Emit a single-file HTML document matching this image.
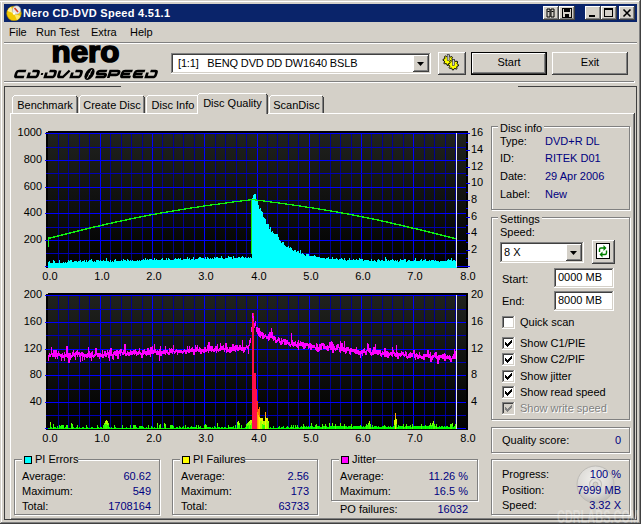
<!DOCTYPE html>
<html><head><meta charset="utf-8"><style>
html,body{margin:0;padding:0}
body{width:641px;height:524px;position:relative;overflow:hidden;background:#d4d0c8;font-family:"Liberation Sans",sans-serif;font-size:11px;color:#000}
.t{position:absolute;white-space:pre;line-height:13px;font-family:"Liberation Sans",sans-serif;font-size:11px}
</style></head><body>
<div style="position:absolute;left:0px;top:1px;width:640px;height:1px;background:#fff"></div>
<div style="position:absolute;left:1px;top:1px;width:1px;height:522px;background:#fff"></div>
<div style="position:absolute;left:639px;top:1px;width:1px;height:522px;background:#808080"></div>
<div style="position:absolute;left:1px;top:522px;width:639px;height:1px;background:#808080"></div>
<div style="position:absolute;left:640px;top:0px;width:1px;height:524px;background:#404040"></div>
<div style="position:absolute;left:0px;top:523px;width:641px;height:1px;background:#404040"></div>
<div style="position:absolute;left:4px;top:4px;width:633px;height:18px;background:#0a246a"></div>
<svg style="position:absolute;left:6px;top:5px" width="16" height="16" viewBox="0 0 16 16">
<circle cx="8" cy="8.5" r="7.3" fill="#f2c800" stroke="#b08a00" stroke-width="0.6"/>
<path d="M8 8.5 L1.5 6 A7 7 0 0 1 5 1.8 Z" fill="#fff3a0"/>
<path d="M8 8.5 L14.5 11 A7 7 0 0 1 11 15.2 Z" fill="#ffe860"/>
<circle cx="10.5" cy="5" r="4.2" fill="#e8e8e8" stroke="#999" stroke-width="0.5"/>
<path d="M8.5 3 L12 7" stroke="#e04020" stroke-width="1.6"/>
<circle cx="8" cy="8.5" r="1.2" fill="#fff"/>
</svg>
<div class="t" style="left:23px;top:4px;color:#fff;font-weight:bold;letter-spacing:0.28px;line-height:18px">Nero CD-DVD Speed 4.51.1</div>
<div style="position:absolute;left:543px;top:6px;width:16px;height:14px;box-shadow:inset -1px -1px #404040, inset 1px 1px #fff, inset -2px -2px #808080, inset 2px 2px #d4d0c8;background:#d4d0c8"><svg width="16" height="14" style="position:absolute;left:0;top:0"><path d="M4 3h3v8h-3z M8 3h3v8h-3z" fill="none" stroke="#000" stroke-width="1"/><rect x="4.5" y="5" width="2" height="1" fill="#000"/><rect x="8.5" y="5" width="2" height="1" fill="#000"/></svg></div>
<div style="position:absolute;left:559px;top:6px;width:16px;height:14px;box-shadow:inset -1px -1px #404040, inset 1px 1px #fff, inset -2px -2px #808080, inset 2px 2px #d4d0c8;background:#d4d0c8"><svg width="16" height="14" style="position:absolute;left:0;top:0"><rect x="3.5" y="2.5" width="9" height="9" fill="none" stroke="#000"/><rect x="5" y="3" width="6" height="3" fill="#000"/><rect x="6" y="8" width="4" height="3" fill="#000"/></svg></div>
<div style="position:absolute;left:585px;top:6px;width:16px;height:14px;box-shadow:inset -1px -1px #404040, inset 1px 1px #fff, inset -2px -2px #808080, inset 2px 2px #d4d0c8;background:#d4d0c8"><div style="position:absolute;left:4px;top:9px;width:6px;height:2px;background:#000"></div></div>
<div style="position:absolute;left:601px;top:6px;width:16px;height:14px;box-shadow:inset -1px -1px #404040, inset 1px 1px #fff, inset -2px -2px #808080, inset 2px 2px #d4d0c8;background:#d4d0c8"><div style="position:absolute;left:3px;top:2px;width:9px;height:9px;box-sizing:border-box;border:1px solid #000;border-top-width:2px"></div></div>
<div style="position:absolute;left:619px;top:6px;width:16px;height:14px;box-shadow:inset -1px -1px #404040, inset 1px 1px #fff, inset -2px -2px #808080, inset 2px 2px #d4d0c8;background:#d4d0c8"><svg width="16" height="14" style="position:absolute;left:0;top:0"><path d="M4.5 3.5 L11.5 10.5 M11.5 3.5 L4.5 10.5" stroke="#000" stroke-width="1.6"/></svg></div>
<div class="t" style="left:9px;top:26px;">File</div>
<div class="t" style="left:36px;top:26px;">Run Test</div>
<div class="t" style="left:91px;top:26px;">Extra</div>
<div class="t" style="left:130px;top:26px;">Help</div>
<div style="position:absolute;left:4px;top:42px;width:633px;height:1px;background:#808080"></div>
<div style="position:absolute;left:4px;top:43px;width:633px;height:1px;background:#fff"></div>
<svg style="position:absolute;left:0;top:40px" width="170" height="42" viewBox="0 40 170 42"><text x="51.5" y="62" font-family="Liberation Sans" font-weight="bold" font-size="30" stroke="#000" stroke-width="1.6" textLength="68" lengthAdjust="spacingAndGlyphs">nero</text></svg>
<svg style="position:absolute;left:0;top:70px" width="170" height="9" viewBox="0 0 170 9" overflow="visible"><g transform="translate(0,4) skewX(-18) translate(0,-4)" fill="none" stroke="#000" stroke-width="2.7"><path transform="translate(15,0)" d="M10 1 H3 Q1 1 1 3 V5 Q1 7 3 7 H10"/><path transform="translate(28,0)" d="M3.5 1 H8 Q10 1 10 3 V5 Q10 7 8 7 H1 V2.5"/><path transform="translate(45,0)" d="M3.5 1 H8 Q10 1 10 3 V5 Q10 7 8 7 H1 V2.5"/><path transform="translate(58,0)" d="M1 0.5 V5 Q1 7 3 7 H6 L10.5 0.5"/><path transform="translate(71,0)" d="M3.5 1 H8 Q10 1 10 3 V5 Q10 7 8 7 H1 V2.5"/><path transform="translate(96,0)" d="M10 1 H3 Q1 1 1 2.5 Q1 4 3 4 H8 Q10 4 10 5.5 Q10 7 8 7 H0.5"/><path transform="translate(108.5,0)" d="M1 8 V1 H8 Q10 1 10 2.5 V3 Q10 4.8 8 4.8 H2"/><path transform="translate(121,0)" d="M10.5 1 H3 Q1 1 1 3 V5 Q1 7 3 7 H10.5 M2 4 H9"/><path transform="translate(133.5,0)" d="M10.5 1 H3 Q1 1 1 3 V5 Q1 7 3 7 H10.5 M2 4 H9"/><path transform="translate(146,0)" d="M3.5 1 H8 Q10 1 10 3 V5 Q10 7 8 7 H1 V2.5"/></g><g transform="translate(0,4) skewX(-18) translate(0,-4)"><rect x="41" y="3" width="2" height="2" fill="#000"/></g><g transform="translate(89.5,4) rotate(-55)"><ellipse cx="0" cy="0" rx="6.8" ry="4" fill="#000"/><path d="M-5 0.6 L5 -0.6" stroke="#d4d0c8" stroke-width="0.9"/><circle cx="0" cy="0" r="0.9" fill="#d4d0c8"/></g></svg>
<div style="position:absolute;left:171px;top:53px;width:260px;height:21px;box-shadow:inset -1px -1px #fff, inset 1px 1px #808080, inset -2px -2px #d4d0c8, inset 2px 2px #404040;background:#fff"></div>
<div class="t" style="left:178px;top:57px;letter-spacing:-0.15px">[1:1]&nbsp;&nbsp;&nbsp;BENQ DVD DD DW1640 BSLB</div>
<div style="position:absolute;left:413px;top:55px;width:16px;height:17px;box-shadow:inset -1px -1px #404040, inset 1px 1px #fff, inset -2px -2px #808080, inset 2px 2px #d4d0c8;background:#d4d0c8;"></div>
<svg style="position:absolute;left:413px;top:55px" width="16" height="17"><path d="M4 7h7l-3.5 4z" fill="#000"/></svg>
<div style="position:absolute;left:438px;top:52px;width:28px;height:23px;box-shadow:inset -1px -1px #404040, inset 1px 1px #fff, inset -2px -2px #808080, inset 2px 2px #d4d0c8;background:#d4d0c8;"></div>
<svg style="position:absolute;left:440px;top:53px" width="24" height="20" viewBox="0 0 24 20"><polygon points="8.20,2.10 9.21,2.20 9.69,3.70 10.37,4.06 11.88,3.62 12.52,4.41 11.80,5.81 12.03,6.54 13.40,7.30 13.30,8.31 11.80,8.79 11.44,9.47 11.88,10.98 11.09,11.62 9.69,10.90 8.96,11.13 8.20,12.50 7.19,12.40 6.71,10.90 6.03,10.54 4.52,10.98 3.88,10.19 4.60,8.79 4.37,8.06 3.00,7.30 3.10,6.29 4.60,5.81 4.96,5.13 4.52,3.62 5.31,2.98 6.71,3.70 7.44,3.47" fill="#ffff00" stroke="#000" stroke-width="1"/><rect x="7.2" y="1.5" width="2" height="6" fill="#c8c8d8" stroke="#333" stroke-width="0.6"/><polygon points="13.40,6.60 14.41,6.70 14.89,8.20 15.57,8.56 17.08,8.12 17.72,8.91 17.00,10.31 17.23,11.04 18.60,11.80 18.50,12.81 17.00,13.29 16.64,13.97 17.08,15.48 16.29,16.12 14.89,15.40 14.16,15.63 13.40,17.00 12.39,16.90 11.91,15.40 11.23,15.04 9.72,15.48 9.08,14.69 9.80,13.29 9.57,12.56 8.20,11.80 8.30,10.79 9.80,10.31 10.16,9.63 9.72,8.12 10.51,7.48 11.91,8.20 12.64,7.97" fill="#ffff00" stroke="#000" stroke-width="1"/><rect x="12.4" y="6.5" width="2" height="6" fill="#c8c8d8" stroke="#333" stroke-width="0.6"/></svg>
<div style="position:absolute;left:471px;top:52px;width:76px;height:23px;background:#000"></div>
<div style="position:absolute;left:472px;top:53px;width:74px;height:21px;box-shadow:inset -1px -1px #404040, inset 1px 1px #fff, inset -2px -2px #808080, inset 2px 2px #d4d0c8;background:#d4d0c8;"></div>
<div class="t" style="left:471px;top:56px;width:76px;text-align:center">Start</div>
<div style="position:absolute;left:552px;top:52px;width:76px;height:23px;box-shadow:inset -1px -1px #404040, inset 1px 1px #fff, inset -2px -2px #808080, inset 2px 2px #d4d0c8;background:#d4d0c8;"></div>
<div class="t" style="left:552px;top:56px;width:76px;text-align:center">Exit</div>
<div style="position:absolute;left:4px;top:81px;width:630px;height:1px;background:#808080"></div>
<div style="position:absolute;left:4px;top:82px;width:631px;height:1px;background:#fff"></div>
<div style="position:absolute;left:634px;top:81px;width:1px;height:1px;background:#fff"></div>
<div style="position:absolute;left:4px;top:86px;width:633px;height:434px;border:1px solid #404040;border-bottom:none;border-top:none;box-sizing:border-box"></div>
<div style="position:absolute;left:4px;top:86px;width:117px;height:1px;background:#404040"></div>
<div style="position:absolute;left:518px;top:86px;width:119px;height:1px;background:#404040"></div>
<div style="position:absolute;left:4px;top:519px;width:633px;height:1px;background:#404040"></div>
<div style="position:absolute;left:10px;top:113px;width:625px;height:407px;box-shadow:inset -1px -1px #404040, inset 1px 1px #fff, inset -2px -2px #808080"></div>
<div style="position:absolute;left:13px;top:96px;width:64px;height:17px;background:#d4d0c8"></div>
<div style="position:absolute;left:12px;top:97px;width:1px;height:16px;background:#fff"></div>
<div style="position:absolute;left:14px;top:95px;width:62px;height:1px;background:#fff"></div>
<div style="position:absolute;left:13px;top:96px;width:1px;height:1px;background:#fff"></div>
<div style="position:absolute;left:77px;top:97px;width:1px;height:16px;background:#404040"></div>
<div style="position:absolute;left:76px;top:96px;width:1px;height:1px;background:#404040"></div>
<div style="position:absolute;left:76px;top:97px;width:1px;height:16px;background:#808080"></div>
<div class="t" style="left:12px;top:99px;width:66px;text-align:center">Benchmark</div>
<div style="position:absolute;left:80px;top:96px;width:64px;height:17px;background:#d4d0c8"></div>
<div style="position:absolute;left:79px;top:97px;width:1px;height:16px;background:#fff"></div>
<div style="position:absolute;left:81px;top:95px;width:62px;height:1px;background:#fff"></div>
<div style="position:absolute;left:80px;top:96px;width:1px;height:1px;background:#fff"></div>
<div style="position:absolute;left:144px;top:97px;width:1px;height:16px;background:#404040"></div>
<div style="position:absolute;left:143px;top:96px;width:1px;height:1px;background:#404040"></div>
<div style="position:absolute;left:143px;top:97px;width:1px;height:16px;background:#808080"></div>
<div class="t" style="left:79px;top:99px;width:66px;text-align:center">Create Disc</div>
<div style="position:absolute;left:147px;top:96px;width:52px;height:17px;background:#d4d0c8"></div>
<div style="position:absolute;left:146px;top:97px;width:1px;height:16px;background:#fff"></div>
<div style="position:absolute;left:148px;top:95px;width:50px;height:1px;background:#fff"></div>
<div style="position:absolute;left:147px;top:96px;width:1px;height:1px;background:#fff"></div>
<div style="position:absolute;left:199px;top:97px;width:1px;height:16px;background:#404040"></div>
<div style="position:absolute;left:198px;top:96px;width:1px;height:1px;background:#404040"></div>
<div style="position:absolute;left:198px;top:97px;width:1px;height:16px;background:#808080"></div>
<div class="t" style="left:146px;top:99px;width:54px;text-align:center">Disc Info</div>
<div style="position:absolute;left:270px;top:96px;width:53px;height:17px;background:#d4d0c8"></div>
<div style="position:absolute;left:269px;top:97px;width:1px;height:16px;background:#fff"></div>
<div style="position:absolute;left:271px;top:95px;width:51px;height:1px;background:#fff"></div>
<div style="position:absolute;left:270px;top:96px;width:1px;height:1px;background:#fff"></div>
<div style="position:absolute;left:323px;top:97px;width:1px;height:16px;background:#404040"></div>
<div style="position:absolute;left:322px;top:96px;width:1px;height:1px;background:#404040"></div>
<div style="position:absolute;left:322px;top:97px;width:1px;height:16px;background:#808080"></div>
<div class="t" style="left:269px;top:99px;width:55px;text-align:center">ScanDisc</div>
<div style="position:absolute;left:198px;top:94px;width:69px;height:20px;background:#d4d0c8"></div>
<div style="position:absolute;left:197px;top:95px;width:1px;height:19px;background:#fff"></div>
<div style="position:absolute;left:199px;top:93px;width:67px;height:1px;background:#fff"></div>
<div style="position:absolute;left:198px;top:94px;width:1px;height:1px;background:#fff"></div>
<div style="position:absolute;left:267px;top:95px;width:1px;height:19px;background:#404040"></div>
<div style="position:absolute;left:266px;top:94px;width:1px;height:1px;background:#404040"></div>
<div style="position:absolute;left:266px;top:95px;width:1px;height:19px;background:#808080"></div>
<div class="t" style="left:197px;top:97px;width:71px;text-align:center">Disc Quality</div>
<svg style="position:absolute;left:0;top:0" width="641" height="524" shape-rendering="crispEdges"><defs>
<linearGradient id="g1" x1="0" y1="133" x2="0" y2="267" gradientUnits="userSpaceOnUse"><stop offset="0" stop-color="#20221e"/><stop offset="1" stop-color="#000"/></linearGradient>
<linearGradient id="g2" x1="0" y1="295" x2="0" y2="429" gradientUnits="userSpaceOnUse"><stop offset="0" stop-color="#20221e"/><stop offset="1" stop-color="#000"/></linearGradient>
<linearGradient id="pif" x1="0" y1="429" x2="0" y2="395" gradientUnits="userSpaceOnUse">
<stop offset="0" stop-color="#00ff00"/><stop offset="0.25" stop-color="#b4ff00"/><stop offset="0.45" stop-color="#ffd000"/><stop offset="0.65" stop-color="#ff6000"/><stop offset="1" stop-color="#ff1048"/></linearGradient>
</defs><rect x="46" y="131" width="422" height="137" fill="#000"/><rect x="46" y="131" width="2" height="1" fill="#d4d0c8"/><rect x="48" y="133" width="418" height="134" fill="url(#g1)"/><rect x="58" y="133" width="1" height="134" fill="#000090"/><rect x="68" y="133" width="1" height="134" fill="#000090"/><rect x="79" y="133" width="1" height="134" fill="#000090"/><rect x="89" y="133" width="1" height="134" fill="#000090"/><rect x="100" y="133" width="1" height="134" fill="#0000ff"/><rect x="110" y="133" width="1" height="134" fill="#000090"/><rect x="121" y="133" width="1" height="134" fill="#000090"/><rect x="131" y="133" width="1" height="134" fill="#000090"/><rect x="142" y="133" width="1" height="134" fill="#000090"/><rect x="152" y="133" width="1" height="134" fill="#0000ff"/><rect x="162" y="133" width="1" height="134" fill="#000090"/><rect x="173" y="133" width="1" height="134" fill="#000090"/><rect x="183" y="133" width="1" height="134" fill="#000090"/><rect x="194" y="133" width="1" height="134" fill="#000090"/><rect x="204" y="133" width="1" height="134" fill="#0000ff"/><rect x="215" y="133" width="1" height="134" fill="#000090"/><rect x="225" y="133" width="1" height="134" fill="#000090"/><rect x="236" y="133" width="1" height="134" fill="#000090"/><rect x="246" y="133" width="1" height="134" fill="#000090"/><rect x="257" y="133" width="1" height="134" fill="#0000ff"/><rect x="267" y="133" width="1" height="134" fill="#000090"/><rect x="277" y="133" width="1" height="134" fill="#000090"/><rect x="288" y="133" width="1" height="134" fill="#000090"/><rect x="298" y="133" width="1" height="134" fill="#000090"/><rect x="309" y="133" width="1" height="134" fill="#0000ff"/><rect x="319" y="133" width="1" height="134" fill="#000090"/><rect x="330" y="133" width="1" height="134" fill="#000090"/><rect x="340" y="133" width="1" height="134" fill="#000090"/><rect x="351" y="133" width="1" height="134" fill="#000090"/><rect x="361" y="133" width="1" height="134" fill="#0000ff"/><rect x="371" y="133" width="1" height="134" fill="#000090"/><rect x="382" y="133" width="1" height="134" fill="#000090"/><rect x="392" y="133" width="1" height="134" fill="#000090"/><rect x="403" y="133" width="1" height="134" fill="#000090"/><rect x="413" y="133" width="1" height="134" fill="#0000ff"/><rect x="424" y="133" width="1" height="134" fill="#000090"/><rect x="434" y="133" width="1" height="134" fill="#000090"/><rect x="445" y="133" width="1" height="134" fill="#000090"/><rect x="455" y="133" width="1" height="134" fill="#000090"/><rect x="45" y="133" width="421" height="1" fill="#0000ff"/><rect x="46" y="147" width="420" height="1" fill="#0000b4"/><rect x="45" y="160" width="421" height="1" fill="#0000ff"/><rect x="46" y="173" width="420" height="1" fill="#0000b4"/><rect x="45" y="187" width="421" height="1" fill="#0000ff"/><rect x="46" y="200" width="420" height="1" fill="#0000b4"/><rect x="45" y="213" width="421" height="1" fill="#0000ff"/><rect x="46" y="227" width="420" height="1" fill="#0000b4"/><rect x="45" y="240" width="421" height="1" fill="#0000ff"/><rect x="46" y="253" width="420" height="1" fill="#0000b4"/><rect x="45" y="266" width="421" height="1" fill="#0000ff"/><rect x="466" y="266" width="4" height="1" fill="#0000ff"/><rect x="466" y="258" width="2" height="1" fill="#0000ff"/><rect x="466" y="250" width="4" height="1" fill="#0000ff"/><rect x="466" y="242" width="2" height="1" fill="#0000ff"/><rect x="466" y="233" width="4" height="1" fill="#0000ff"/><rect x="466" y="225" width="2" height="1" fill="#0000ff"/><rect x="466" y="217" width="4" height="1" fill="#0000ff"/><rect x="466" y="208" width="2" height="1" fill="#0000ff"/><rect x="466" y="200" width="4" height="1" fill="#0000ff"/><rect x="466" y="192" width="2" height="1" fill="#0000ff"/><rect x="466" y="183" width="4" height="1" fill="#0000ff"/><rect x="466" y="175" width="2" height="1" fill="#0000ff"/><rect x="466" y="167" width="4" height="1" fill="#0000ff"/><rect x="466" y="158" width="2" height="1" fill="#0000ff"/><rect x="466" y="150" width="4" height="1" fill="#0000ff"/><rect x="466" y="142" width="2" height="1" fill="#0000ff"/><rect x="466" y="133" width="4" height="1" fill="#0000ff"/><rect x="48" y="262" width="1" height="6" fill="#00ffff"/><rect x="49" y="261" width="1" height="7" fill="#00ffff"/><rect x="50" y="263" width="1" height="5" fill="#00ffff"/><rect x="51" y="263" width="1" height="5" fill="#00ffff"/><rect x="52" y="263" width="1" height="5" fill="#00ffff"/><rect x="53" y="260" width="1" height="8" fill="#00ffff"/><rect x="54" y="261" width="1" height="7" fill="#00ffff"/><rect x="55" y="263" width="1" height="5" fill="#00ffff"/><rect x="56" y="263" width="1" height="5" fill="#00ffff"/><rect x="57" y="263" width="1" height="5" fill="#00ffff"/><rect x="58" y="263" width="1" height="5" fill="#00ffff"/><rect x="59" y="260" width="1" height="8" fill="#00ffff"/><rect x="60" y="263" width="1" height="5" fill="#00ffff"/><rect x="61" y="263" width="1" height="5" fill="#00ffff"/><rect x="62" y="263" width="1" height="5" fill="#00ffff"/><rect x="63" y="262" width="1" height="6" fill="#00ffff"/><rect x="64" y="263" width="1" height="5" fill="#00ffff"/><rect x="65" y="262" width="1" height="6" fill="#00ffff"/><rect x="66" y="263" width="1" height="5" fill="#00ffff"/><rect x="67" y="262" width="1" height="6" fill="#00ffff"/><rect x="68" y="260" width="1" height="8" fill="#00ffff"/><rect x="69" y="261" width="1" height="7" fill="#00ffff"/><rect x="70" y="260" width="1" height="8" fill="#00ffff"/><rect x="71" y="260" width="1" height="8" fill="#00ffff"/><rect x="72" y="262" width="1" height="6" fill="#00ffff"/><rect x="73" y="262" width="1" height="6" fill="#00ffff"/><rect x="74" y="261" width="1" height="7" fill="#00ffff"/><rect x="75" y="261" width="1" height="7" fill="#00ffff"/><rect x="76" y="261" width="1" height="7" fill="#00ffff"/><rect x="77" y="262" width="1" height="6" fill="#00ffff"/><rect x="78" y="261" width="1" height="7" fill="#00ffff"/><rect x="79" y="261" width="1" height="7" fill="#00ffff"/><rect x="80" y="260" width="1" height="8" fill="#00ffff"/><rect x="81" y="262" width="1" height="6" fill="#00ffff"/><rect x="82" y="261" width="1" height="7" fill="#00ffff"/><rect x="83" y="261" width="1" height="7" fill="#00ffff"/><rect x="84" y="260" width="1" height="8" fill="#00ffff"/><rect x="85" y="262" width="1" height="6" fill="#00ffff"/><rect x="86" y="260" width="1" height="8" fill="#00ffff"/><rect x="87" y="262" width="1" height="6" fill="#00ffff"/><rect x="88" y="261" width="1" height="7" fill="#00ffff"/><rect x="89" y="260" width="1" height="8" fill="#00ffff"/><rect x="90" y="260" width="1" height="8" fill="#00ffff"/><rect x="91" y="259" width="1" height="9" fill="#00ffff"/><rect x="92" y="261" width="1" height="7" fill="#00ffff"/><rect x="93" y="262" width="1" height="6" fill="#00ffff"/><rect x="94" y="261" width="1" height="7" fill="#00ffff"/><rect x="95" y="262" width="1" height="6" fill="#00ffff"/><rect x="96" y="260" width="1" height="8" fill="#00ffff"/><rect x="97" y="260" width="1" height="8" fill="#00ffff"/><rect x="98" y="260" width="1" height="8" fill="#00ffff"/><rect x="99" y="261" width="1" height="7" fill="#00ffff"/><rect x="100" y="260" width="1" height="8" fill="#00ffff"/><rect x="101" y="261" width="1" height="7" fill="#00ffff"/><rect x="102" y="261" width="1" height="7" fill="#00ffff"/><rect x="103" y="260" width="1" height="8" fill="#00ffff"/><rect x="104" y="261" width="1" height="7" fill="#00ffff"/><rect x="105" y="261" width="1" height="7" fill="#00ffff"/><rect x="106" y="258" width="1" height="10" fill="#00ffff"/><rect x="107" y="261" width="1" height="7" fill="#00ffff"/><rect x="108" y="261" width="1" height="7" fill="#00ffff"/><rect x="109" y="262" width="1" height="6" fill="#00ffff"/><rect x="110" y="260" width="1" height="8" fill="#00ffff"/><rect x="111" y="262" width="1" height="6" fill="#00ffff"/><rect x="112" y="261" width="1" height="7" fill="#00ffff"/><rect x="113" y="262" width="1" height="6" fill="#00ffff"/><rect x="114" y="260" width="1" height="8" fill="#00ffff"/><rect x="115" y="259" width="1" height="9" fill="#00ffff"/><rect x="116" y="261" width="1" height="7" fill="#00ffff"/><rect x="117" y="261" width="1" height="7" fill="#00ffff"/><rect x="118" y="261" width="1" height="7" fill="#00ffff"/><rect x="119" y="261" width="1" height="7" fill="#00ffff"/><rect x="120" y="261" width="1" height="7" fill="#00ffff"/><rect x="121" y="260" width="1" height="8" fill="#00ffff"/><rect x="122" y="261" width="1" height="7" fill="#00ffff"/><rect x="123" y="259" width="1" height="9" fill="#00ffff"/><rect x="124" y="260" width="1" height="8" fill="#00ffff"/><rect x="125" y="260" width="1" height="8" fill="#00ffff"/><rect x="126" y="261" width="1" height="7" fill="#00ffff"/><rect x="127" y="259" width="1" height="9" fill="#00ffff"/><rect x="128" y="260" width="1" height="8" fill="#00ffff"/><rect x="129" y="261" width="1" height="7" fill="#00ffff"/><rect x="130" y="260" width="1" height="8" fill="#00ffff"/><rect x="131" y="261" width="1" height="7" fill="#00ffff"/><rect x="132" y="260" width="1" height="8" fill="#00ffff"/><rect x="133" y="261" width="1" height="7" fill="#00ffff"/><rect x="134" y="261" width="1" height="7" fill="#00ffff"/><rect x="135" y="261" width="1" height="7" fill="#00ffff"/><rect x="136" y="261" width="1" height="7" fill="#00ffff"/><rect x="137" y="260" width="1" height="8" fill="#00ffff"/><rect x="138" y="261" width="1" height="7" fill="#00ffff"/><rect x="139" y="260" width="1" height="8" fill="#00ffff"/><rect x="140" y="261" width="1" height="7" fill="#00ffff"/><rect x="141" y="260" width="1" height="8" fill="#00ffff"/><rect x="142" y="260" width="1" height="8" fill="#00ffff"/><rect x="143" y="259" width="1" height="9" fill="#00ffff"/><rect x="144" y="260" width="1" height="8" fill="#00ffff"/><rect x="145" y="258" width="1" height="10" fill="#00ffff"/><rect x="146" y="260" width="1" height="8" fill="#00ffff"/><rect x="147" y="259" width="1" height="9" fill="#00ffff"/><rect x="148" y="260" width="1" height="8" fill="#00ffff"/><rect x="149" y="259" width="1" height="9" fill="#00ffff"/><rect x="150" y="259" width="1" height="9" fill="#00ffff"/><rect x="151" y="259" width="1" height="9" fill="#00ffff"/><rect x="152" y="260" width="1" height="8" fill="#00ffff"/><rect x="153" y="260" width="1" height="8" fill="#00ffff"/><rect x="154" y="258" width="1" height="10" fill="#00ffff"/><rect x="155" y="260" width="1" height="8" fill="#00ffff"/><rect x="156" y="259" width="1" height="9" fill="#00ffff"/><rect x="157" y="260" width="1" height="8" fill="#00ffff"/><rect x="158" y="260" width="1" height="8" fill="#00ffff"/><rect x="159" y="260" width="1" height="8" fill="#00ffff"/><rect x="160" y="260" width="1" height="8" fill="#00ffff"/><rect x="161" y="259" width="1" height="9" fill="#00ffff"/><rect x="162" y="258" width="1" height="10" fill="#00ffff"/><rect x="163" y="260" width="1" height="8" fill="#00ffff"/><rect x="164" y="260" width="1" height="8" fill="#00ffff"/><rect x="165" y="260" width="1" height="8" fill="#00ffff"/><rect x="166" y="258" width="1" height="10" fill="#00ffff"/><rect x="167" y="260" width="1" height="8" fill="#00ffff"/><rect x="168" y="258" width="1" height="10" fill="#00ffff"/><rect x="169" y="259" width="1" height="9" fill="#00ffff"/><rect x="170" y="260" width="1" height="8" fill="#00ffff"/><rect x="171" y="260" width="1" height="8" fill="#00ffff"/><rect x="172" y="260" width="1" height="8" fill="#00ffff"/><rect x="173" y="260" width="1" height="8" fill="#00ffff"/><rect x="174" y="259" width="1" height="9" fill="#00ffff"/><rect x="175" y="258" width="1" height="10" fill="#00ffff"/><rect x="176" y="259" width="1" height="9" fill="#00ffff"/><rect x="177" y="259" width="1" height="9" fill="#00ffff"/><rect x="178" y="258" width="1" height="10" fill="#00ffff"/><rect x="179" y="259" width="1" height="9" fill="#00ffff"/><rect x="180" y="258" width="1" height="10" fill="#00ffff"/><rect x="181" y="260" width="1" height="8" fill="#00ffff"/><rect x="182" y="260" width="1" height="8" fill="#00ffff"/><rect x="183" y="259" width="1" height="9" fill="#00ffff"/><rect x="184" y="259" width="1" height="9" fill="#00ffff"/><rect x="185" y="259" width="1" height="9" fill="#00ffff"/><rect x="186" y="259" width="1" height="9" fill="#00ffff"/><rect x="187" y="257" width="1" height="11" fill="#00ffff"/><rect x="188" y="259" width="1" height="9" fill="#00ffff"/><rect x="189" y="258" width="1" height="10" fill="#00ffff"/><rect x="190" y="260" width="1" height="8" fill="#00ffff"/><rect x="191" y="259" width="1" height="9" fill="#00ffff"/><rect x="192" y="259" width="1" height="9" fill="#00ffff"/><rect x="193" y="257" width="1" height="11" fill="#00ffff"/><rect x="194" y="260" width="1" height="8" fill="#00ffff"/><rect x="195" y="259" width="1" height="9" fill="#00ffff"/><rect x="196" y="259" width="1" height="9" fill="#00ffff"/><rect x="197" y="259" width="1" height="9" fill="#00ffff"/><rect x="198" y="258" width="1" height="10" fill="#00ffff"/><rect x="199" y="257" width="1" height="11" fill="#00ffff"/><rect x="200" y="257" width="1" height="11" fill="#00ffff"/><rect x="201" y="258" width="1" height="10" fill="#00ffff"/><rect x="202" y="258" width="1" height="10" fill="#00ffff"/><rect x="203" y="258" width="1" height="10" fill="#00ffff"/><rect x="204" y="259" width="1" height="9" fill="#00ffff"/><rect x="205" y="257" width="1" height="11" fill="#00ffff"/><rect x="206" y="259" width="1" height="9" fill="#00ffff"/><rect x="207" y="257" width="1" height="11" fill="#00ffff"/><rect x="208" y="258" width="1" height="10" fill="#00ffff"/><rect x="209" y="259" width="1" height="9" fill="#00ffff"/><rect x="210" y="258" width="1" height="10" fill="#00ffff"/><rect x="211" y="259" width="1" height="9" fill="#00ffff"/><rect x="212" y="258" width="1" height="10" fill="#00ffff"/><rect x="213" y="259" width="1" height="9" fill="#00ffff"/><rect x="214" y="257" width="1" height="11" fill="#00ffff"/><rect x="215" y="258" width="1" height="10" fill="#00ffff"/><rect x="216" y="257" width="1" height="11" fill="#00ffff"/><rect x="217" y="257" width="1" height="11" fill="#00ffff"/><rect x="218" y="258" width="1" height="10" fill="#00ffff"/><rect x="219" y="258" width="1" height="10" fill="#00ffff"/><rect x="220" y="258" width="1" height="10" fill="#00ffff"/><rect x="221" y="256" width="1" height="12" fill="#00ffff"/><rect x="222" y="258" width="1" height="10" fill="#00ffff"/><rect x="223" y="259" width="1" height="9" fill="#00ffff"/><rect x="224" y="259" width="1" height="9" fill="#00ffff"/><rect x="225" y="258" width="1" height="10" fill="#00ffff"/><rect x="226" y="258" width="1" height="10" fill="#00ffff"/><rect x="227" y="258" width="1" height="10" fill="#00ffff"/><rect x="228" y="256" width="1" height="12" fill="#00ffff"/><rect x="229" y="257" width="1" height="11" fill="#00ffff"/><rect x="230" y="257" width="1" height="11" fill="#00ffff"/><rect x="231" y="257" width="1" height="11" fill="#00ffff"/><rect x="232" y="259" width="1" height="9" fill="#00ffff"/><rect x="233" y="256" width="1" height="12" fill="#00ffff"/><rect x="234" y="258" width="1" height="10" fill="#00ffff"/><rect x="235" y="258" width="1" height="10" fill="#00ffff"/><rect x="236" y="258" width="1" height="10" fill="#00ffff"/><rect x="237" y="258" width="1" height="10" fill="#00ffff"/><rect x="238" y="257" width="1" height="11" fill="#00ffff"/><rect x="239" y="257" width="1" height="11" fill="#00ffff"/><rect x="240" y="258" width="1" height="10" fill="#00ffff"/><rect x="241" y="257" width="1" height="11" fill="#00ffff"/><rect x="242" y="256" width="1" height="12" fill="#00ffff"/><rect x="243" y="257" width="1" height="11" fill="#00ffff"/><rect x="244" y="258" width="1" height="10" fill="#00ffff"/><rect x="245" y="257" width="1" height="11" fill="#00ffff"/><rect x="246" y="258" width="1" height="10" fill="#00ffff"/><rect x="247" y="258" width="1" height="10" fill="#00ffff"/><rect x="248" y="257" width="1" height="11" fill="#00ffff"/><rect x="249" y="258" width="1" height="10" fill="#00ffff"/><rect x="250" y="257" width="1" height="11" fill="#00ffff"/><rect x="251" y="258" width="1" height="10" fill="#00ffff"/><rect x="252" y="198" width="1" height="70" fill="#00ffff"/><rect x="253" y="195" width="1" height="73" fill="#00ffff"/><rect x="254" y="194" width="1" height="74" fill="#00ffff"/><rect x="255" y="194" width="1" height="74" fill="#00ffff"/><rect x="256" y="199" width="1" height="69" fill="#00ffff"/><rect x="257" y="201" width="1" height="67" fill="#00ffff"/><rect x="258" y="205" width="1" height="63" fill="#00ffff"/><rect x="259" y="209" width="1" height="59" fill="#00ffff"/><rect x="260" y="208" width="1" height="60" fill="#00ffff"/><rect x="261" y="211" width="1" height="57" fill="#00ffff"/><rect x="262" y="212" width="1" height="56" fill="#00ffff"/><rect x="263" y="217" width="1" height="51" fill="#00ffff"/><rect x="264" y="218" width="1" height="50" fill="#00ffff"/><rect x="265" y="219" width="1" height="49" fill="#00ffff"/><rect x="266" y="224" width="1" height="44" fill="#00ffff"/><rect x="267" y="224" width="1" height="44" fill="#00ffff"/><rect x="268" y="224" width="1" height="44" fill="#00ffff"/><rect x="269" y="229" width="1" height="39" fill="#00ffff"/><rect x="270" y="227" width="1" height="41" fill="#00ffff"/><rect x="271" y="232" width="1" height="36" fill="#00ffff"/><rect x="272" y="231" width="1" height="37" fill="#00ffff"/><rect x="273" y="233" width="1" height="35" fill="#00ffff"/><rect x="274" y="234" width="1" height="34" fill="#00ffff"/><rect x="275" y="234" width="1" height="34" fill="#00ffff"/><rect x="276" y="234" width="1" height="34" fill="#00ffff"/><rect x="277" y="234" width="1" height="34" fill="#00ffff"/><rect x="278" y="237" width="1" height="31" fill="#00ffff"/><rect x="279" y="240" width="1" height="28" fill="#00ffff"/><rect x="280" y="241" width="1" height="27" fill="#00ffff"/><rect x="281" y="243" width="1" height="25" fill="#00ffff"/><rect x="282" y="242" width="1" height="26" fill="#00ffff"/><rect x="283" y="242" width="1" height="26" fill="#00ffff"/><rect x="284" y="245" width="1" height="23" fill="#00ffff"/><rect x="285" y="246" width="1" height="22" fill="#00ffff"/><rect x="286" y="247" width="1" height="21" fill="#00ffff"/><rect x="287" y="247" width="1" height="21" fill="#00ffff"/><rect x="288" y="246" width="1" height="22" fill="#00ffff"/><rect x="289" y="248" width="1" height="20" fill="#00ffff"/><rect x="290" y="247" width="1" height="21" fill="#00ffff"/><rect x="291" y="248" width="1" height="20" fill="#00ffff"/><rect x="292" y="250" width="1" height="18" fill="#00ffff"/><rect x="293" y="251" width="1" height="17" fill="#00ffff"/><rect x="294" y="250" width="1" height="18" fill="#00ffff"/><rect x="295" y="250" width="1" height="18" fill="#00ffff"/><rect x="296" y="252" width="1" height="16" fill="#00ffff"/><rect x="297" y="251" width="1" height="17" fill="#00ffff"/><rect x="298" y="251" width="1" height="17" fill="#00ffff"/><rect x="299" y="253" width="1" height="15" fill="#00ffff"/><rect x="300" y="250" width="1" height="18" fill="#00ffff"/><rect x="301" y="254" width="1" height="14" fill="#00ffff"/><rect x="302" y="253" width="1" height="15" fill="#00ffff"/><rect x="303" y="254" width="1" height="14" fill="#00ffff"/><rect x="304" y="255" width="1" height="13" fill="#00ffff"/><rect x="305" y="256" width="1" height="12" fill="#00ffff"/><rect x="306" y="254" width="1" height="14" fill="#00ffff"/><rect x="307" y="254" width="1" height="14" fill="#00ffff"/><rect x="308" y="254" width="1" height="14" fill="#00ffff"/><rect x="309" y="256" width="1" height="12" fill="#00ffff"/><rect x="310" y="256" width="1" height="12" fill="#00ffff"/><rect x="311" y="256" width="1" height="12" fill="#00ffff"/><rect x="312" y="256" width="1" height="12" fill="#00ffff"/><rect x="313" y="256" width="1" height="12" fill="#00ffff"/><rect x="314" y="255" width="1" height="13" fill="#00ffff"/><rect x="315" y="256" width="1" height="12" fill="#00ffff"/><rect x="316" y="257" width="1" height="11" fill="#00ffff"/><rect x="317" y="257" width="1" height="11" fill="#00ffff"/><rect x="318" y="257" width="1" height="11" fill="#00ffff"/><rect x="319" y="257" width="1" height="11" fill="#00ffff"/><rect x="320" y="258" width="1" height="10" fill="#00ffff"/><rect x="321" y="258" width="1" height="10" fill="#00ffff"/><rect x="322" y="258" width="1" height="10" fill="#00ffff"/><rect x="323" y="258" width="1" height="10" fill="#00ffff"/><rect x="324" y="258" width="1" height="10" fill="#00ffff"/><rect x="325" y="259" width="1" height="9" fill="#00ffff"/><rect x="326" y="258" width="1" height="10" fill="#00ffff"/><rect x="327" y="258" width="1" height="10" fill="#00ffff"/><rect x="328" y="257" width="1" height="11" fill="#00ffff"/><rect x="329" y="259" width="1" height="9" fill="#00ffff"/><rect x="330" y="259" width="1" height="9" fill="#00ffff"/><rect x="331" y="259" width="1" height="9" fill="#00ffff"/><rect x="332" y="257" width="1" height="11" fill="#00ffff"/><rect x="333" y="259" width="1" height="9" fill="#00ffff"/><rect x="334" y="259" width="1" height="9" fill="#00ffff"/><rect x="335" y="259" width="1" height="9" fill="#00ffff"/><rect x="336" y="258" width="1" height="10" fill="#00ffff"/><rect x="337" y="259" width="1" height="9" fill="#00ffff"/><rect x="338" y="260" width="1" height="8" fill="#00ffff"/><rect x="339" y="259" width="1" height="9" fill="#00ffff"/><rect x="340" y="259" width="1" height="9" fill="#00ffff"/><rect x="341" y="258" width="1" height="10" fill="#00ffff"/><rect x="342" y="259" width="1" height="9" fill="#00ffff"/><rect x="343" y="260" width="1" height="8" fill="#00ffff"/><rect x="344" y="258" width="1" height="10" fill="#00ffff"/><rect x="345" y="260" width="1" height="8" fill="#00ffff"/><rect x="346" y="261" width="1" height="7" fill="#00ffff"/><rect x="347" y="260" width="1" height="8" fill="#00ffff"/><rect x="348" y="260" width="1" height="8" fill="#00ffff"/><rect x="349" y="258" width="1" height="10" fill="#00ffff"/><rect x="350" y="260" width="1" height="8" fill="#00ffff"/><rect x="351" y="260" width="1" height="8" fill="#00ffff"/><rect x="352" y="260" width="1" height="8" fill="#00ffff"/><rect x="353" y="259" width="1" height="9" fill="#00ffff"/><rect x="354" y="260" width="1" height="8" fill="#00ffff"/><rect x="355" y="260" width="1" height="8" fill="#00ffff"/><rect x="356" y="259" width="1" height="9" fill="#00ffff"/><rect x="357" y="260" width="1" height="8" fill="#00ffff"/><rect x="358" y="260" width="1" height="8" fill="#00ffff"/><rect x="359" y="258" width="1" height="10" fill="#00ffff"/><rect x="360" y="259" width="1" height="9" fill="#00ffff"/><rect x="361" y="259" width="1" height="9" fill="#00ffff"/><rect x="362" y="259" width="1" height="9" fill="#00ffff"/><rect x="363" y="261" width="1" height="7" fill="#00ffff"/><rect x="364" y="260" width="1" height="8" fill="#00ffff"/><rect x="365" y="260" width="1" height="8" fill="#00ffff"/><rect x="366" y="260" width="1" height="8" fill="#00ffff"/><rect x="367" y="260" width="1" height="8" fill="#00ffff"/><rect x="368" y="260" width="1" height="8" fill="#00ffff"/><rect x="369" y="261" width="1" height="7" fill="#00ffff"/><rect x="370" y="261" width="1" height="7" fill="#00ffff"/><rect x="371" y="259" width="1" height="9" fill="#00ffff"/><rect x="372" y="261" width="1" height="7" fill="#00ffff"/><rect x="373" y="261" width="1" height="7" fill="#00ffff"/><rect x="374" y="260" width="1" height="8" fill="#00ffff"/><rect x="375" y="261" width="1" height="7" fill="#00ffff"/><rect x="376" y="262" width="1" height="6" fill="#00ffff"/><rect x="377" y="260" width="1" height="8" fill="#00ffff"/><rect x="378" y="259" width="1" height="9" fill="#00ffff"/><rect x="379" y="260" width="1" height="8" fill="#00ffff"/><rect x="380" y="261" width="1" height="7" fill="#00ffff"/><rect x="381" y="260" width="1" height="8" fill="#00ffff"/><rect x="382" y="260" width="1" height="8" fill="#00ffff"/><rect x="383" y="261" width="1" height="7" fill="#00ffff"/><rect x="384" y="261" width="1" height="7" fill="#00ffff"/><rect x="385" y="257" width="1" height="11" fill="#00ffff"/><rect x="386" y="259" width="1" height="9" fill="#00ffff"/><rect x="387" y="261" width="1" height="7" fill="#00ffff"/><rect x="388" y="260" width="1" height="8" fill="#00ffff"/><rect x="389" y="261" width="1" height="7" fill="#00ffff"/><rect x="390" y="260" width="1" height="8" fill="#00ffff"/><rect x="391" y="260" width="1" height="8" fill="#00ffff"/><rect x="392" y="259" width="1" height="9" fill="#00ffff"/><rect x="393" y="260" width="1" height="8" fill="#00ffff"/><rect x="394" y="261" width="1" height="7" fill="#00ffff"/><rect x="395" y="260" width="1" height="8" fill="#00ffff"/><rect x="396" y="261" width="1" height="7" fill="#00ffff"/><rect x="397" y="260" width="1" height="8" fill="#00ffff"/><rect x="398" y="262" width="1" height="6" fill="#00ffff"/><rect x="399" y="261" width="1" height="7" fill="#00ffff"/><rect x="400" y="259" width="1" height="9" fill="#00ffff"/><rect x="401" y="260" width="1" height="8" fill="#00ffff"/><rect x="402" y="260" width="1" height="8" fill="#00ffff"/><rect x="403" y="260" width="1" height="8" fill="#00ffff"/><rect x="404" y="259" width="1" height="9" fill="#00ffff"/><rect x="405" y="259" width="1" height="9" fill="#00ffff"/><rect x="406" y="262" width="1" height="6" fill="#00ffff"/><rect x="407" y="261" width="1" height="7" fill="#00ffff"/><rect x="408" y="260" width="1" height="8" fill="#00ffff"/><rect x="409" y="260" width="1" height="8" fill="#00ffff"/><rect x="410" y="261" width="1" height="7" fill="#00ffff"/><rect x="411" y="261" width="1" height="7" fill="#00ffff"/><rect x="412" y="261" width="1" height="7" fill="#00ffff"/><rect x="413" y="261" width="1" height="7" fill="#00ffff"/><rect x="414" y="260" width="1" height="8" fill="#00ffff"/><rect x="415" y="258" width="1" height="10" fill="#00ffff"/><rect x="416" y="261" width="1" height="7" fill="#00ffff"/><rect x="417" y="261" width="1" height="7" fill="#00ffff"/><rect x="418" y="261" width="1" height="7" fill="#00ffff"/><rect x="419" y="261" width="1" height="7" fill="#00ffff"/><rect x="420" y="260" width="1" height="8" fill="#00ffff"/><rect x="421" y="259" width="1" height="9" fill="#00ffff"/><rect x="422" y="261" width="1" height="7" fill="#00ffff"/><rect x="423" y="260" width="1" height="8" fill="#00ffff"/><rect x="424" y="260" width="1" height="8" fill="#00ffff"/><rect x="425" y="259" width="1" height="9" fill="#00ffff"/><rect x="426" y="261" width="1" height="7" fill="#00ffff"/><rect x="427" y="261" width="1" height="7" fill="#00ffff"/><rect x="428" y="261" width="1" height="7" fill="#00ffff"/><rect x="429" y="260" width="1" height="8" fill="#00ffff"/><rect x="430" y="261" width="1" height="7" fill="#00ffff"/><rect x="431" y="260" width="1" height="8" fill="#00ffff"/><rect x="432" y="260" width="1" height="8" fill="#00ffff"/><rect x="433" y="260" width="1" height="8" fill="#00ffff"/><rect x="434" y="261" width="1" height="7" fill="#00ffff"/><rect x="435" y="260" width="1" height="8" fill="#00ffff"/><rect x="436" y="261" width="1" height="7" fill="#00ffff"/><rect x="437" y="261" width="1" height="7" fill="#00ffff"/><rect x="438" y="261" width="1" height="7" fill="#00ffff"/><rect x="439" y="262" width="1" height="6" fill="#00ffff"/><rect x="440" y="261" width="1" height="7" fill="#00ffff"/><rect x="441" y="261" width="1" height="7" fill="#00ffff"/><rect x="442" y="261" width="1" height="7" fill="#00ffff"/><rect x="443" y="261" width="1" height="7" fill="#00ffff"/><rect x="444" y="261" width="1" height="7" fill="#00ffff"/><rect x="445" y="261" width="1" height="7" fill="#00ffff"/><rect x="446" y="261" width="1" height="7" fill="#00ffff"/><rect x="447" y="260" width="1" height="8" fill="#00ffff"/><rect x="448" y="259" width="1" height="9" fill="#00ffff"/><rect x="449" y="260" width="1" height="8" fill="#00ffff"/><rect x="450" y="260" width="1" height="8" fill="#00ffff"/><rect x="451" y="258" width="1" height="10" fill="#00ffff"/><rect x="452" y="261" width="1" height="7" fill="#00ffff"/><rect x="453" y="260" width="1" height="8" fill="#00ffff"/><rect x="454" y="260" width="1" height="8" fill="#00ffff"/><rect x="455" y="261" width="1" height="7" fill="#00ffff"/><rect x="456" y="259" width="1" height="9" fill="#00ffff"/><rect x="48" y="237" width="1" height="10" fill="#11ee11"/><rect x="48" y="238" width="1" height="1" fill="#11ee11"/><rect x="49" y="237" width="1" height="2" fill="#11ee11"/><rect x="50" y="237" width="1" height="2" fill="#11ee11"/><rect x="51" y="237" width="1" height="1" fill="#11ee11"/><rect x="52" y="237" width="1" height="1" fill="#11ee11"/><rect x="53" y="236" width="1" height="2" fill="#11ee11"/><rect x="54" y="236" width="1" height="2" fill="#11ee11"/><rect x="55" y="236" width="1" height="1" fill="#11ee11"/><rect x="56" y="236" width="1" height="1" fill="#11ee11"/><rect x="57" y="235" width="1" height="2" fill="#11ee11"/><rect x="58" y="235" width="1" height="2" fill="#11ee11"/><rect x="59" y="235" width="1" height="1" fill="#11ee11"/><rect x="60" y="235" width="1" height="1" fill="#11ee11"/><rect x="61" y="234" width="1" height="2" fill="#11ee11"/><rect x="62" y="234" width="1" height="2" fill="#11ee11"/><rect x="63" y="234" width="1" height="1" fill="#11ee11"/><rect x="64" y="234" width="1" height="1" fill="#11ee11"/><rect x="65" y="233" width="1" height="2" fill="#11ee11"/><rect x="66" y="233" width="1" height="2" fill="#11ee11"/><rect x="67" y="233" width="1" height="1" fill="#11ee11"/><rect x="68" y="233" width="1" height="1" fill="#11ee11"/><rect x="69" y="232" width="1" height="2" fill="#11ee11"/><rect x="70" y="232" width="1" height="2" fill="#11ee11"/><rect x="71" y="232" width="1" height="1" fill="#11ee11"/><rect x="72" y="232" width="1" height="1" fill="#11ee11"/><rect x="73" y="231" width="1" height="2" fill="#11ee11"/><rect x="74" y="231" width="1" height="2" fill="#11ee11"/><rect x="75" y="231" width="1" height="1" fill="#11ee11"/><rect x="76" y="231" width="1" height="1" fill="#11ee11"/><rect x="77" y="230" width="1" height="2" fill="#11ee11"/><rect x="78" y="230" width="1" height="2" fill="#11ee11"/><rect x="79" y="230" width="1" height="1" fill="#11ee11"/><rect x="80" y="230" width="1" height="1" fill="#11ee11"/><rect x="81" y="229" width="1" height="2" fill="#11ee11"/><rect x="82" y="229" width="1" height="2" fill="#11ee11"/><rect x="83" y="229" width="1" height="1" fill="#11ee11"/><rect x="84" y="229" width="1" height="1" fill="#11ee11"/><rect x="85" y="228" width="1" height="2" fill="#11ee11"/><rect x="86" y="228" width="1" height="2" fill="#11ee11"/><rect x="87" y="228" width="1" height="1" fill="#11ee11"/><rect x="88" y="228" width="1" height="1" fill="#11ee11"/><rect x="89" y="227" width="1" height="2" fill="#11ee11"/><rect x="90" y="227" width="1" height="2" fill="#11ee11"/><rect x="91" y="227" width="1" height="1" fill="#11ee11"/><rect x="92" y="227" width="1" height="1" fill="#11ee11"/><rect x="93" y="226" width="1" height="2" fill="#11ee11"/><rect x="94" y="226" width="1" height="2" fill="#11ee11"/><rect x="95" y="226" width="1" height="1" fill="#11ee11"/><rect x="96" y="226" width="1" height="1" fill="#11ee11"/><rect x="97" y="226" width="1" height="1" fill="#11ee11"/><rect x="98" y="225" width="1" height="2" fill="#11ee11"/><rect x="99" y="225" width="1" height="2" fill="#11ee11"/><rect x="100" y="225" width="1" height="1" fill="#11ee11"/><rect x="101" y="225" width="1" height="1" fill="#11ee11"/><rect x="102" y="224" width="1" height="2" fill="#11ee11"/><rect x="103" y="224" width="1" height="2" fill="#11ee11"/><rect x="104" y="224" width="1" height="1" fill="#11ee11"/><rect x="105" y="224" width="1" height="1" fill="#11ee11"/><rect x="106" y="223" width="1" height="2" fill="#11ee11"/><rect x="107" y="223" width="1" height="2" fill="#11ee11"/><rect x="108" y="223" width="1" height="1" fill="#11ee11"/><rect x="109" y="223" width="1" height="1" fill="#11ee11"/><rect x="110" y="223" width="1" height="1" fill="#11ee11"/><rect x="111" y="222" width="1" height="2" fill="#11ee11"/><rect x="112" y="222" width="1" height="2" fill="#11ee11"/><rect x="113" y="222" width="1" height="1" fill="#11ee11"/><rect x="114" y="222" width="1" height="1" fill="#11ee11"/><rect x="115" y="221" width="1" height="2" fill="#11ee11"/><rect x="116" y="221" width="1" height="2" fill="#11ee11"/><rect x="117" y="221" width="1" height="1" fill="#11ee11"/><rect x="118" y="221" width="1" height="1" fill="#11ee11"/><rect x="119" y="221" width="1" height="1" fill="#11ee11"/><rect x="120" y="220" width="1" height="2" fill="#11ee11"/><rect x="121" y="220" width="1" height="2" fill="#11ee11"/><rect x="122" y="220" width="1" height="1" fill="#11ee11"/><rect x="123" y="220" width="1" height="1" fill="#11ee11"/><rect x="124" y="220" width="1" height="1" fill="#11ee11"/><rect x="125" y="219" width="1" height="2" fill="#11ee11"/><rect x="126" y="219" width="1" height="2" fill="#11ee11"/><rect x="127" y="219" width="1" height="1" fill="#11ee11"/><rect x="128" y="219" width="1" height="1" fill="#11ee11"/><rect x="129" y="218" width="1" height="2" fill="#11ee11"/><rect x="130" y="218" width="1" height="2" fill="#11ee11"/><rect x="131" y="218" width="1" height="1" fill="#11ee11"/><rect x="132" y="218" width="1" height="1" fill="#11ee11"/><rect x="133" y="218" width="1" height="1" fill="#11ee11"/><rect x="134" y="217" width="1" height="2" fill="#11ee11"/><rect x="135" y="217" width="1" height="2" fill="#11ee11"/><rect x="136" y="217" width="1" height="1" fill="#11ee11"/><rect x="137" y="217" width="1" height="1" fill="#11ee11"/><rect x="138" y="217" width="1" height="1" fill="#11ee11"/><rect x="139" y="216" width="1" height="2" fill="#11ee11"/><rect x="140" y="216" width="1" height="2" fill="#11ee11"/><rect x="141" y="216" width="1" height="1" fill="#11ee11"/><rect x="142" y="216" width="1" height="1" fill="#11ee11"/><rect x="143" y="216" width="1" height="1" fill="#11ee11"/><rect x="144" y="215" width="1" height="2" fill="#11ee11"/><rect x="145" y="215" width="1" height="2" fill="#11ee11"/><rect x="146" y="215" width="1" height="1" fill="#11ee11"/><rect x="147" y="215" width="1" height="1" fill="#11ee11"/><rect x="148" y="215" width="1" height="1" fill="#11ee11"/><rect x="149" y="214" width="1" height="2" fill="#11ee11"/><rect x="150" y="214" width="1" height="2" fill="#11ee11"/><rect x="151" y="214" width="1" height="1" fill="#11ee11"/><rect x="152" y="214" width="1" height="1" fill="#11ee11"/><rect x="153" y="214" width="1" height="1" fill="#11ee11"/><rect x="154" y="214" width="1" height="1" fill="#11ee11"/><rect x="155" y="213" width="1" height="2" fill="#11ee11"/><rect x="156" y="213" width="1" height="2" fill="#11ee11"/><rect x="157" y="213" width="1" height="1" fill="#11ee11"/><rect x="158" y="213" width="1" height="1" fill="#11ee11"/><rect x="159" y="213" width="1" height="1" fill="#11ee11"/><rect x="160" y="212" width="1" height="2" fill="#11ee11"/><rect x="161" y="212" width="1" height="2" fill="#11ee11"/><rect x="162" y="212" width="1" height="1" fill="#11ee11"/><rect x="163" y="212" width="1" height="1" fill="#11ee11"/><rect x="164" y="212" width="1" height="1" fill="#11ee11"/><rect x="165" y="212" width="1" height="1" fill="#11ee11"/><rect x="166" y="211" width="1" height="2" fill="#11ee11"/><rect x="167" y="211" width="1" height="2" fill="#11ee11"/><rect x="168" y="211" width="1" height="1" fill="#11ee11"/><rect x="169" y="211" width="1" height="1" fill="#11ee11"/><rect x="170" y="211" width="1" height="1" fill="#11ee11"/><rect x="171" y="211" width="1" height="1" fill="#11ee11"/><rect x="172" y="210" width="1" height="2" fill="#11ee11"/><rect x="173" y="210" width="1" height="2" fill="#11ee11"/><rect x="174" y="210" width="1" height="1" fill="#11ee11"/><rect x="175" y="210" width="1" height="1" fill="#11ee11"/><rect x="176" y="210" width="1" height="1" fill="#11ee11"/><rect x="177" y="210" width="1" height="1" fill="#11ee11"/><rect x="178" y="209" width="1" height="2" fill="#11ee11"/><rect x="179" y="209" width="1" height="2" fill="#11ee11"/><rect x="180" y="209" width="1" height="1" fill="#11ee11"/><rect x="181" y="209" width="1" height="1" fill="#11ee11"/><rect x="182" y="209" width="1" height="1" fill="#11ee11"/><rect x="183" y="209" width="1" height="1" fill="#11ee11"/><rect x="184" y="208" width="1" height="2" fill="#11ee11"/><rect x="185" y="208" width="1" height="2" fill="#11ee11"/><rect x="186" y="208" width="1" height="1" fill="#11ee11"/><rect x="187" y="208" width="1" height="1" fill="#11ee11"/><rect x="188" y="208" width="1" height="1" fill="#11ee11"/><rect x="189" y="208" width="1" height="1" fill="#11ee11"/><rect x="190" y="207" width="1" height="2" fill="#11ee11"/><rect x="191" y="207" width="1" height="2" fill="#11ee11"/><rect x="192" y="207" width="1" height="1" fill="#11ee11"/><rect x="193" y="207" width="1" height="1" fill="#11ee11"/><rect x="194" y="207" width="1" height="1" fill="#11ee11"/><rect x="195" y="207" width="1" height="1" fill="#11ee11"/><rect x="196" y="207" width="1" height="1" fill="#11ee11"/><rect x="197" y="206" width="1" height="2" fill="#11ee11"/><rect x="198" y="206" width="1" height="2" fill="#11ee11"/><rect x="199" y="206" width="1" height="1" fill="#11ee11"/><rect x="200" y="206" width="1" height="1" fill="#11ee11"/><rect x="201" y="206" width="1" height="1" fill="#11ee11"/><rect x="202" y="206" width="1" height="1" fill="#11ee11"/><rect x="203" y="205" width="1" height="2" fill="#11ee11"/><rect x="204" y="205" width="1" height="2" fill="#11ee11"/><rect x="205" y="205" width="1" height="1" fill="#11ee11"/><rect x="206" y="205" width="1" height="1" fill="#11ee11"/><rect x="207" y="205" width="1" height="1" fill="#11ee11"/><rect x="208" y="205" width="1" height="1" fill="#11ee11"/><rect x="209" y="205" width="1" height="1" fill="#11ee11"/><rect x="210" y="204" width="1" height="2" fill="#11ee11"/><rect x="211" y="204" width="1" height="2" fill="#11ee11"/><rect x="212" y="204" width="1" height="1" fill="#11ee11"/><rect x="213" y="204" width="1" height="1" fill="#11ee11"/><rect x="214" y="204" width="1" height="1" fill="#11ee11"/><rect x="215" y="204" width="1" height="1" fill="#11ee11"/><rect x="216" y="204" width="1" height="1" fill="#11ee11"/><rect x="217" y="204" width="1" height="1" fill="#11ee11"/><rect x="218" y="203" width="1" height="2" fill="#11ee11"/><rect x="219" y="203" width="1" height="2" fill="#11ee11"/><rect x="220" y="203" width="1" height="1" fill="#11ee11"/><rect x="221" y="203" width="1" height="1" fill="#11ee11"/><rect x="222" y="203" width="1" height="1" fill="#11ee11"/><rect x="223" y="203" width="1" height="1" fill="#11ee11"/><rect x="224" y="203" width="1" height="1" fill="#11ee11"/><rect x="225" y="202" width="1" height="2" fill="#11ee11"/><rect x="226" y="202" width="1" height="2" fill="#11ee11"/><rect x="227" y="202" width="1" height="1" fill="#11ee11"/><rect x="228" y="202" width="1" height="1" fill="#11ee11"/><rect x="229" y="202" width="1" height="1" fill="#11ee11"/><rect x="230" y="202" width="1" height="1" fill="#11ee11"/><rect x="231" y="202" width="1" height="1" fill="#11ee11"/><rect x="232" y="201" width="1" height="2" fill="#11ee11"/><rect x="233" y="201" width="1" height="2" fill="#11ee11"/><rect x="234" y="201" width="1" height="1" fill="#11ee11"/><rect x="235" y="201" width="1" height="1" fill="#11ee11"/><rect x="236" y="201" width="1" height="1" fill="#11ee11"/><rect x="237" y="201" width="1" height="1" fill="#11ee11"/><rect x="238" y="201" width="1" height="1" fill="#11ee11"/><rect x="239" y="201" width="1" height="1" fill="#11ee11"/><rect x="240" y="200" width="1" height="2" fill="#11ee11"/><rect x="241" y="200" width="1" height="2" fill="#11ee11"/><rect x="242" y="200" width="1" height="1" fill="#11ee11"/><rect x="243" y="200" width="1" height="1" fill="#11ee11"/><rect x="244" y="200" width="1" height="1" fill="#11ee11"/><rect x="245" y="200" width="1" height="1" fill="#11ee11"/><rect x="246" y="200" width="1" height="1" fill="#11ee11"/><rect x="247" y="200" width="1" height="1" fill="#11ee11"/><rect x="248" y="199" width="1" height="2" fill="#11ee11"/><rect x="249" y="199" width="1" height="2" fill="#11ee11"/><rect x="250" y="199" width="1" height="1" fill="#11ee11"/><rect x="251" y="199" width="1" height="1" fill="#11ee11"/><rect x="252" y="199" width="1" height="1" fill="#11ee11"/><rect x="253" y="199" width="1" height="1" fill="#11ee11"/><rect x="254" y="199" width="1" height="1" fill="#11ee11"/><rect x="255" y="199" width="1" height="2" fill="#11ee11"/><rect x="256" y="199" width="1" height="2" fill="#11ee11"/><rect x="257" y="200" width="1" height="1" fill="#11ee11"/><rect x="258" y="200" width="1" height="1" fill="#11ee11"/><rect x="259" y="200" width="1" height="1" fill="#11ee11"/><rect x="260" y="200" width="1" height="1" fill="#11ee11"/><rect x="261" y="200" width="1" height="1" fill="#11ee11"/><rect x="262" y="200" width="1" height="1" fill="#11ee11"/><rect x="263" y="200" width="1" height="2" fill="#11ee11"/><rect x="264" y="200" width="1" height="2" fill="#11ee11"/><rect x="265" y="201" width="1" height="1" fill="#11ee11"/><rect x="266" y="201" width="1" height="1" fill="#11ee11"/><rect x="267" y="201" width="1" height="1" fill="#11ee11"/><rect x="268" y="201" width="1" height="1" fill="#11ee11"/><rect x="269" y="201" width="1" height="1" fill="#11ee11"/><rect x="270" y="201" width="1" height="2" fill="#11ee11"/><rect x="271" y="201" width="1" height="2" fill="#11ee11"/><rect x="272" y="202" width="1" height="1" fill="#11ee11"/><rect x="273" y="202" width="1" height="1" fill="#11ee11"/><rect x="274" y="202" width="1" height="1" fill="#11ee11"/><rect x="275" y="202" width="1" height="1" fill="#11ee11"/><rect x="276" y="202" width="1" height="1" fill="#11ee11"/><rect x="277" y="202" width="1" height="1" fill="#11ee11"/><rect x="278" y="202" width="1" height="2" fill="#11ee11"/><rect x="279" y="202" width="1" height="2" fill="#11ee11"/><rect x="280" y="203" width="1" height="1" fill="#11ee11"/><rect x="281" y="203" width="1" height="1" fill="#11ee11"/><rect x="282" y="203" width="1" height="1" fill="#11ee11"/><rect x="283" y="203" width="1" height="1" fill="#11ee11"/><rect x="284" y="203" width="1" height="1" fill="#11ee11"/><rect x="285" y="203" width="1" height="2" fill="#11ee11"/><rect x="286" y="203" width="1" height="2" fill="#11ee11"/><rect x="287" y="204" width="1" height="1" fill="#11ee11"/><rect x="288" y="204" width="1" height="1" fill="#11ee11"/><rect x="289" y="204" width="1" height="1" fill="#11ee11"/><rect x="290" y="204" width="1" height="1" fill="#11ee11"/><rect x="291" y="204" width="1" height="1" fill="#11ee11"/><rect x="292" y="204" width="1" height="2" fill="#11ee11"/><rect x="293" y="204" width="1" height="2" fill="#11ee11"/><rect x="294" y="205" width="1" height="1" fill="#11ee11"/><rect x="295" y="205" width="1" height="1" fill="#11ee11"/><rect x="296" y="205" width="1" height="1" fill="#11ee11"/><rect x="297" y="205" width="1" height="1" fill="#11ee11"/><rect x="298" y="205" width="1" height="1" fill="#11ee11"/><rect x="299" y="205" width="1" height="2" fill="#11ee11"/><rect x="300" y="205" width="1" height="2" fill="#11ee11"/><rect x="301" y="206" width="1" height="1" fill="#11ee11"/><rect x="302" y="206" width="1" height="1" fill="#11ee11"/><rect x="303" y="206" width="1" height="1" fill="#11ee11"/><rect x="304" y="206" width="1" height="1" fill="#11ee11"/><rect x="305" y="206" width="1" height="2" fill="#11ee11"/><rect x="306" y="206" width="1" height="2" fill="#11ee11"/><rect x="307" y="207" width="1" height="1" fill="#11ee11"/><rect x="308" y="207" width="1" height="1" fill="#11ee11"/><rect x="309" y="207" width="1" height="1" fill="#11ee11"/><rect x="310" y="207" width="1" height="1" fill="#11ee11"/><rect x="311" y="207" width="1" height="1" fill="#11ee11"/><rect x="312" y="207" width="1" height="2" fill="#11ee11"/><rect x="313" y="207" width="1" height="2" fill="#11ee11"/><rect x="314" y="208" width="1" height="1" fill="#11ee11"/><rect x="315" y="208" width="1" height="1" fill="#11ee11"/><rect x="316" y="208" width="1" height="1" fill="#11ee11"/><rect x="317" y="208" width="1" height="1" fill="#11ee11"/><rect x="318" y="208" width="1" height="2" fill="#11ee11"/><rect x="319" y="208" width="1" height="2" fill="#11ee11"/><rect x="320" y="209" width="1" height="1" fill="#11ee11"/><rect x="321" y="209" width="1" height="1" fill="#11ee11"/><rect x="322" y="209" width="1" height="1" fill="#11ee11"/><rect x="323" y="209" width="1" height="1" fill="#11ee11"/><rect x="324" y="209" width="1" height="2" fill="#11ee11"/><rect x="325" y="209" width="1" height="2" fill="#11ee11"/><rect x="326" y="210" width="1" height="1" fill="#11ee11"/><rect x="327" y="210" width="1" height="1" fill="#11ee11"/><rect x="328" y="210" width="1" height="1" fill="#11ee11"/><rect x="329" y="210" width="1" height="1" fill="#11ee11"/><rect x="330" y="210" width="1" height="2" fill="#11ee11"/><rect x="331" y="210" width="1" height="2" fill="#11ee11"/><rect x="332" y="211" width="1" height="1" fill="#11ee11"/><rect x="333" y="211" width="1" height="1" fill="#11ee11"/><rect x="334" y="211" width="1" height="1" fill="#11ee11"/><rect x="335" y="211" width="1" height="1" fill="#11ee11"/><rect x="336" y="211" width="1" height="2" fill="#11ee11"/><rect x="337" y="211" width="1" height="2" fill="#11ee11"/><rect x="338" y="212" width="1" height="1" fill="#11ee11"/><rect x="339" y="212" width="1" height="1" fill="#11ee11"/><rect x="340" y="212" width="1" height="1" fill="#11ee11"/><rect x="341" y="212" width="1" height="2" fill="#11ee11"/><rect x="342" y="212" width="1" height="2" fill="#11ee11"/><rect x="343" y="213" width="1" height="1" fill="#11ee11"/><rect x="344" y="213" width="1" height="1" fill="#11ee11"/><rect x="345" y="213" width="1" height="1" fill="#11ee11"/><rect x="346" y="213" width="1" height="1" fill="#11ee11"/><rect x="347" y="213" width="1" height="2" fill="#11ee11"/><rect x="348" y="213" width="1" height="2" fill="#11ee11"/><rect x="349" y="214" width="1" height="1" fill="#11ee11"/><rect x="350" y="214" width="1" height="1" fill="#11ee11"/><rect x="351" y="214" width="1" height="1" fill="#11ee11"/><rect x="352" y="214" width="1" height="2" fill="#11ee11"/><rect x="353" y="214" width="1" height="2" fill="#11ee11"/><rect x="354" y="215" width="1" height="1" fill="#11ee11"/><rect x="355" y="215" width="1" height="1" fill="#11ee11"/><rect x="356" y="215" width="1" height="1" fill="#11ee11"/><rect x="357" y="215" width="1" height="2" fill="#11ee11"/><rect x="358" y="215" width="1" height="2" fill="#11ee11"/><rect x="359" y="216" width="1" height="1" fill="#11ee11"/><rect x="360" y="216" width="1" height="1" fill="#11ee11"/><rect x="361" y="216" width="1" height="1" fill="#11ee11"/><rect x="362" y="216" width="1" height="2" fill="#11ee11"/><rect x="363" y="216" width="1" height="2" fill="#11ee11"/><rect x="364" y="217" width="1" height="1" fill="#11ee11"/><rect x="365" y="217" width="1" height="1" fill="#11ee11"/><rect x="366" y="217" width="1" height="1" fill="#11ee11"/><rect x="367" y="217" width="1" height="2" fill="#11ee11"/><rect x="368" y="217" width="1" height="2" fill="#11ee11"/><rect x="369" y="218" width="1" height="1" fill="#11ee11"/><rect x="370" y="218" width="1" height="1" fill="#11ee11"/><rect x="371" y="218" width="1" height="1" fill="#11ee11"/><rect x="372" y="218" width="1" height="2" fill="#11ee11"/><rect x="373" y="218" width="1" height="2" fill="#11ee11"/><rect x="374" y="219" width="1" height="1" fill="#11ee11"/><rect x="375" y="219" width="1" height="1" fill="#11ee11"/><rect x="376" y="219" width="1" height="1" fill="#11ee11"/><rect x="377" y="219" width="1" height="2" fill="#11ee11"/><rect x="378" y="219" width="1" height="2" fill="#11ee11"/><rect x="379" y="220" width="1" height="1" fill="#11ee11"/><rect x="380" y="220" width="1" height="1" fill="#11ee11"/><rect x="381" y="220" width="1" height="2" fill="#11ee11"/><rect x="382" y="220" width="1" height="2" fill="#11ee11"/><rect x="383" y="221" width="1" height="1" fill="#11ee11"/><rect x="384" y="221" width="1" height="1" fill="#11ee11"/><rect x="385" y="221" width="1" height="1" fill="#11ee11"/><rect x="386" y="221" width="1" height="2" fill="#11ee11"/><rect x="387" y="221" width="1" height="2" fill="#11ee11"/><rect x="388" y="222" width="1" height="1" fill="#11ee11"/><rect x="389" y="222" width="1" height="1" fill="#11ee11"/><rect x="390" y="222" width="1" height="2" fill="#11ee11"/><rect x="391" y="222" width="1" height="2" fill="#11ee11"/><rect x="392" y="223" width="1" height="1" fill="#11ee11"/><rect x="393" y="223" width="1" height="1" fill="#11ee11"/><rect x="394" y="223" width="1" height="2" fill="#11ee11"/><rect x="395" y="223" width="1" height="2" fill="#11ee11"/><rect x="396" y="224" width="1" height="1" fill="#11ee11"/><rect x="397" y="224" width="1" height="1" fill="#11ee11"/><rect x="398" y="224" width="1" height="1" fill="#11ee11"/><rect x="399" y="224" width="1" height="2" fill="#11ee11"/><rect x="400" y="224" width="1" height="2" fill="#11ee11"/><rect x="401" y="225" width="1" height="1" fill="#11ee11"/><rect x="402" y="225" width="1" height="1" fill="#11ee11"/><rect x="403" y="225" width="1" height="2" fill="#11ee11"/><rect x="404" y="225" width="1" height="2" fill="#11ee11"/><rect x="405" y="226" width="1" height="1" fill="#11ee11"/><rect x="406" y="226" width="1" height="1" fill="#11ee11"/><rect x="407" y="226" width="1" height="2" fill="#11ee11"/><rect x="408" y="226" width="1" height="2" fill="#11ee11"/><rect x="409" y="227" width="1" height="1" fill="#11ee11"/><rect x="410" y="227" width="1" height="1" fill="#11ee11"/><rect x="411" y="227" width="1" height="2" fill="#11ee11"/><rect x="412" y="227" width="1" height="2" fill="#11ee11"/><rect x="413" y="228" width="1" height="1" fill="#11ee11"/><rect x="414" y="228" width="1" height="1" fill="#11ee11"/><rect x="415" y="228" width="1" height="1" fill="#11ee11"/><rect x="416" y="228" width="1" height="2" fill="#11ee11"/><rect x="417" y="228" width="1" height="2" fill="#11ee11"/><rect x="418" y="229" width="1" height="1" fill="#11ee11"/><rect x="419" y="229" width="1" height="1" fill="#11ee11"/><rect x="420" y="229" width="1" height="2" fill="#11ee11"/><rect x="421" y="229" width="1" height="2" fill="#11ee11"/><rect x="422" y="230" width="1" height="1" fill="#11ee11"/><rect x="423" y="230" width="1" height="1" fill="#11ee11"/><rect x="424" y="230" width="1" height="2" fill="#11ee11"/><rect x="425" y="230" width="1" height="2" fill="#11ee11"/><rect x="426" y="231" width="1" height="1" fill="#11ee11"/><rect x="427" y="231" width="1" height="1" fill="#11ee11"/><rect x="428" y="231" width="1" height="2" fill="#11ee11"/><rect x="429" y="231" width="1" height="2" fill="#11ee11"/><rect x="430" y="232" width="1" height="1" fill="#11ee11"/><rect x="431" y="232" width="1" height="1" fill="#11ee11"/><rect x="432" y="232" width="1" height="2" fill="#11ee11"/><rect x="433" y="232" width="1" height="2" fill="#11ee11"/><rect x="434" y="233" width="1" height="1" fill="#11ee11"/><rect x="435" y="233" width="1" height="1" fill="#11ee11"/><rect x="436" y="233" width="1" height="2" fill="#11ee11"/><rect x="437" y="233" width="1" height="2" fill="#11ee11"/><rect x="438" y="234" width="1" height="1" fill="#11ee11"/><rect x="439" y="234" width="1" height="1" fill="#11ee11"/><rect x="440" y="234" width="1" height="2" fill="#11ee11"/><rect x="441" y="234" width="1" height="2" fill="#11ee11"/><rect x="442" y="235" width="1" height="1" fill="#11ee11"/><rect x="443" y="235" width="1" height="1" fill="#11ee11"/><rect x="444" y="235" width="1" height="2" fill="#11ee11"/><rect x="445" y="235" width="1" height="2" fill="#11ee11"/><rect x="446" y="236" width="1" height="1" fill="#11ee11"/><rect x="447" y="236" width="1" height="1" fill="#11ee11"/><rect x="448" y="236" width="1" height="2" fill="#11ee11"/><rect x="449" y="236" width="1" height="2" fill="#11ee11"/><rect x="450" y="237" width="1" height="1" fill="#11ee11"/><rect x="451" y="237" width="1" height="1" fill="#11ee11"/><rect x="452" y="237" width="1" height="2" fill="#11ee11"/><rect x="453" y="237" width="1" height="2" fill="#11ee11"/><rect x="454" y="238" width="1" height="1" fill="#11ee11"/><rect x="455" y="238" width="1" height="1" fill="#11ee11"/><rect x="251" y="199" width="1" height="55" fill="#11ee11"/><rect x="456" y="133" width="1" height="134" fill="#e8e8e8"/><rect x="46" y="293" width="422" height="137" fill="#000"/><rect x="46" y="293" width="2" height="1" fill="#d4d0c8"/><rect x="48" y="295" width="418" height="134" fill="url(#g2)"/><rect x="58" y="295" width="1" height="134" fill="#000090"/><rect x="68" y="295" width="1" height="134" fill="#000090"/><rect x="79" y="295" width="1" height="134" fill="#000090"/><rect x="89" y="295" width="1" height="134" fill="#000090"/><rect x="100" y="295" width="1" height="134" fill="#0000ff"/><rect x="110" y="295" width="1" height="134" fill="#000090"/><rect x="121" y="295" width="1" height="134" fill="#000090"/><rect x="131" y="295" width="1" height="134" fill="#000090"/><rect x="142" y="295" width="1" height="134" fill="#000090"/><rect x="152" y="295" width="1" height="134" fill="#0000ff"/><rect x="162" y="295" width="1" height="134" fill="#000090"/><rect x="173" y="295" width="1" height="134" fill="#000090"/><rect x="183" y="295" width="1" height="134" fill="#000090"/><rect x="194" y="295" width="1" height="134" fill="#000090"/><rect x="204" y="295" width="1" height="134" fill="#0000ff"/><rect x="215" y="295" width="1" height="134" fill="#000090"/><rect x="225" y="295" width="1" height="134" fill="#000090"/><rect x="236" y="295" width="1" height="134" fill="#000090"/><rect x="246" y="295" width="1" height="134" fill="#000090"/><rect x="257" y="295" width="1" height="134" fill="#0000ff"/><rect x="267" y="295" width="1" height="134" fill="#000090"/><rect x="277" y="295" width="1" height="134" fill="#000090"/><rect x="288" y="295" width="1" height="134" fill="#000090"/><rect x="298" y="295" width="1" height="134" fill="#000090"/><rect x="309" y="295" width="1" height="134" fill="#0000ff"/><rect x="319" y="295" width="1" height="134" fill="#000090"/><rect x="330" y="295" width="1" height="134" fill="#000090"/><rect x="340" y="295" width="1" height="134" fill="#000090"/><rect x="351" y="295" width="1" height="134" fill="#000090"/><rect x="361" y="295" width="1" height="134" fill="#0000ff"/><rect x="371" y="295" width="1" height="134" fill="#000090"/><rect x="382" y="295" width="1" height="134" fill="#000090"/><rect x="392" y="295" width="1" height="134" fill="#000090"/><rect x="403" y="295" width="1" height="134" fill="#000090"/><rect x="413" y="295" width="1" height="134" fill="#0000ff"/><rect x="424" y="295" width="1" height="134" fill="#000090"/><rect x="434" y="295" width="1" height="134" fill="#000090"/><rect x="445" y="295" width="1" height="134" fill="#000090"/><rect x="455" y="295" width="1" height="134" fill="#000090"/><rect x="45" y="295" width="421" height="1" fill="#0000ff"/><rect x="46" y="309" width="420" height="1" fill="#0000b4"/><rect x="45" y="322" width="421" height="1" fill="#0000ff"/><rect x="46" y="335" width="420" height="1" fill="#0000b4"/><rect x="45" y="349" width="421" height="1" fill="#0000ff"/><rect x="46" y="362" width="420" height="1" fill="#0000b4"/><rect x="45" y="375" width="421" height="1" fill="#0000ff"/><rect x="46" y="389" width="420" height="1" fill="#0000b4"/><rect x="45" y="402" width="421" height="1" fill="#0000ff"/><rect x="46" y="415" width="420" height="1" fill="#0000b4"/><rect x="45" y="428" width="421" height="1" fill="#0000ff"/><rect x="48" y="428" width="1" height="1" fill="#00ff00"/><rect x="49" y="428" width="1" height="1" fill="#00ff00"/><rect x="50" y="422" width="1" height="7" fill="#88ff00"/><rect x="50" y="425" width="1" height="4" fill="#22ff00"/><rect x="51" y="427" width="1" height="2" fill="#00ff00"/><rect x="52" y="428" width="1" height="1" fill="#00ff00"/><rect x="53" y="424" width="1" height="5" fill="#44ff00"/><rect x="54" y="427" width="1" height="2" fill="#00ff00"/><rect x="55" y="427" width="1" height="2" fill="#00ff00"/><rect x="56" y="428" width="1" height="1" fill="#00ff00"/><rect x="57" y="426" width="1" height="3" fill="#00ff00"/><rect x="58" y="428" width="1" height="1" fill="#00ff00"/><rect x="59" y="425" width="1" height="4" fill="#22ff00"/><rect x="60" y="426" width="1" height="3" fill="#00ff00"/><rect x="61" y="425" width="1" height="4" fill="#22ff00"/><rect x="62" y="425" width="1" height="4" fill="#22ff00"/><rect x="63" y="425" width="1" height="4" fill="#22ff00"/><rect x="64" y="428" width="1" height="1" fill="#00ff00"/><rect x="65" y="427" width="1" height="2" fill="#00ff00"/><rect x="66" y="425" width="1" height="4" fill="#22ff00"/><rect x="67" y="425" width="1" height="4" fill="#22ff00"/><rect x="68" y="428" width="1" height="1" fill="#00ff00"/><rect x="69" y="428" width="1" height="1" fill="#00ff00"/><rect x="70" y="428" width="1" height="1" fill="#00ff00"/><rect x="71" y="423" width="1" height="6" fill="#66ff00"/><rect x="71" y="425" width="1" height="4" fill="#22ff00"/><rect x="72" y="424" width="1" height="5" fill="#44ff00"/><rect x="73" y="427" width="1" height="2" fill="#00ff00"/><rect x="74" y="428" width="1" height="1" fill="#00ff00"/><rect x="75" y="428" width="1" height="1" fill="#00ff00"/><rect x="76" y="427" width="1" height="2" fill="#00ff00"/><rect x="77" y="425" width="1" height="4" fill="#22ff00"/><rect x="78" y="428" width="1" height="1" fill="#00ff00"/><rect x="79" y="427" width="1" height="2" fill="#00ff00"/><rect x="80" y="428" width="1" height="1" fill="#00ff00"/><rect x="81" y="428" width="1" height="1" fill="#00ff00"/><rect x="82" y="427" width="1" height="2" fill="#00ff00"/><rect x="83" y="427" width="1" height="2" fill="#00ff00"/><rect x="84" y="428" width="1" height="1" fill="#00ff00"/><rect x="85" y="428" width="1" height="1" fill="#00ff00"/><rect x="86" y="425" width="1" height="4" fill="#22ff00"/><rect x="87" y="427" width="1" height="2" fill="#00ff00"/><rect x="88" y="428" width="1" height="1" fill="#00ff00"/><rect x="89" y="428" width="1" height="1" fill="#00ff00"/><rect x="90" y="428" width="1" height="1" fill="#00ff00"/><rect x="91" y="427" width="1" height="2" fill="#00ff00"/><rect x="92" y="427" width="1" height="2" fill="#00ff00"/><rect x="93" y="428" width="1" height="1" fill="#00ff00"/><rect x="94" y="428" width="1" height="1" fill="#00ff00"/><rect x="95" y="428" width="1" height="1" fill="#00ff00"/><rect x="96" y="428" width="1" height="1" fill="#00ff00"/><rect x="97" y="425" width="1" height="4" fill="#22ff00"/><rect x="98" y="427" width="1" height="2" fill="#00ff00"/><rect x="99" y="428" width="1" height="1" fill="#00ff00"/><rect x="100" y="427" width="1" height="2" fill="#00ff00"/><rect x="101" y="427" width="1" height="2" fill="#00ff00"/><rect x="102" y="428" width="1" height="1" fill="#00ff00"/><rect x="103" y="425" width="1" height="4" fill="#22ff00"/><rect x="104" y="423" width="1" height="6" fill="#66ff00"/><rect x="104" y="425" width="1" height="4" fill="#22ff00"/><rect x="105" y="421" width="1" height="8" fill="#aaff00"/><rect x="105" y="424" width="1" height="5" fill="#44ff00"/><rect x="106" y="420" width="1" height="9" fill="#bffb00"/><rect x="106" y="424" width="1" height="5" fill="#44ff00"/><rect x="107" y="421" width="1" height="8" fill="#aaff00"/><rect x="107" y="425" width="1" height="4" fill="#22ff00"/><rect x="108" y="423" width="1" height="6" fill="#66ff00"/><rect x="108" y="425" width="1" height="4" fill="#22ff00"/><rect x="109" y="427" width="1" height="2" fill="#00ff00"/><rect x="110" y="428" width="1" height="1" fill="#00ff00"/><rect x="111" y="427" width="1" height="2" fill="#00ff00"/><rect x="112" y="428" width="1" height="1" fill="#00ff00"/><rect x="113" y="428" width="1" height="1" fill="#00ff00"/><rect x="114" y="425" width="1" height="4" fill="#22ff00"/><rect x="115" y="427" width="1" height="2" fill="#00ff00"/><rect x="116" y="428" width="1" height="1" fill="#00ff00"/><rect x="117" y="428" width="1" height="1" fill="#00ff00"/><rect x="118" y="428" width="1" height="1" fill="#00ff00"/><rect x="119" y="428" width="1" height="1" fill="#00ff00"/><rect x="120" y="428" width="1" height="1" fill="#00ff00"/><rect x="121" y="428" width="1" height="1" fill="#00ff00"/><rect x="122" y="425" width="1" height="4" fill="#22ff00"/><rect x="123" y="428" width="1" height="1" fill="#00ff00"/><rect x="124" y="428" width="1" height="1" fill="#00ff00"/><rect x="125" y="428" width="1" height="1" fill="#00ff00"/><rect x="126" y="427" width="1" height="2" fill="#00ff00"/><rect x="127" y="428" width="1" height="1" fill="#00ff00"/><rect x="128" y="428" width="1" height="1" fill="#00ff00"/><rect x="129" y="428" width="1" height="1" fill="#00ff00"/><rect x="130" y="425" width="1" height="4" fill="#22ff00"/><rect x="131" y="428" width="1" height="1" fill="#00ff00"/><rect x="132" y="428" width="1" height="1" fill="#00ff00"/><rect x="133" y="425" width="1" height="4" fill="#22ff00"/><rect x="134" y="425" width="1" height="4" fill="#22ff00"/><rect x="135" y="425" width="1" height="4" fill="#22ff00"/><rect x="136" y="427" width="1" height="2" fill="#00ff00"/><rect x="137" y="428" width="1" height="1" fill="#00ff00"/><rect x="138" y="428" width="1" height="1" fill="#00ff00"/><rect x="139" y="426" width="1" height="3" fill="#00ff00"/><rect x="140" y="426" width="1" height="3" fill="#00ff00"/><rect x="141" y="426" width="1" height="3" fill="#00ff00"/><rect x="142" y="426" width="1" height="3" fill="#00ff00"/><rect x="143" y="427" width="1" height="2" fill="#00ff00"/><rect x="144" y="428" width="1" height="1" fill="#00ff00"/><rect x="145" y="428" width="1" height="1" fill="#00ff00"/><rect x="146" y="427" width="1" height="2" fill="#00ff00"/><rect x="147" y="428" width="1" height="1" fill="#00ff00"/><rect x="148" y="425" width="1" height="4" fill="#22ff00"/><rect x="149" y="428" width="1" height="1" fill="#00ff00"/><rect x="150" y="428" width="1" height="1" fill="#00ff00"/><rect x="151" y="426" width="1" height="3" fill="#00ff00"/><rect x="152" y="427" width="1" height="2" fill="#00ff00"/><rect x="153" y="428" width="1" height="1" fill="#00ff00"/><rect x="154" y="427" width="1" height="2" fill="#00ff00"/><rect x="155" y="428" width="1" height="1" fill="#00ff00"/><rect x="156" y="428" width="1" height="1" fill="#00ff00"/><rect x="157" y="423" width="1" height="6" fill="#66ff00"/><rect x="157" y="425" width="1" height="4" fill="#22ff00"/><rect x="158" y="428" width="1" height="1" fill="#00ff00"/><rect x="159" y="425" width="1" height="4" fill="#22ff00"/><rect x="160" y="424" width="1" height="5" fill="#44ff00"/><rect x="161" y="428" width="1" height="1" fill="#00ff00"/><rect x="162" y="428" width="1" height="1" fill="#00ff00"/><rect x="163" y="428" width="1" height="1" fill="#00ff00"/><rect x="164" y="423" width="1" height="6" fill="#66ff00"/><rect x="164" y="426" width="1" height="3" fill="#00ff00"/><rect x="165" y="424" width="1" height="5" fill="#44ff00"/><rect x="166" y="428" width="1" height="1" fill="#00ff00"/><rect x="167" y="428" width="1" height="1" fill="#00ff00"/><rect x="168" y="428" width="1" height="1" fill="#00ff00"/><rect x="169" y="428" width="1" height="1" fill="#00ff00"/><rect x="170" y="425" width="1" height="4" fill="#22ff00"/><rect x="171" y="425" width="1" height="4" fill="#22ff00"/><rect x="172" y="425" width="1" height="4" fill="#22ff00"/><rect x="173" y="426" width="1" height="3" fill="#00ff00"/><rect x="174" y="428" width="1" height="1" fill="#00ff00"/><rect x="175" y="428" width="1" height="1" fill="#00ff00"/><rect x="176" y="427" width="1" height="2" fill="#00ff00"/><rect x="177" y="427" width="1" height="2" fill="#00ff00"/><rect x="178" y="428" width="1" height="1" fill="#00ff00"/><rect x="179" y="426" width="1" height="3" fill="#00ff00"/><rect x="180" y="427" width="1" height="2" fill="#00ff00"/><rect x="181" y="428" width="1" height="1" fill="#00ff00"/><rect x="182" y="427" width="1" height="2" fill="#00ff00"/><rect x="183" y="426" width="1" height="3" fill="#00ff00"/><rect x="184" y="428" width="1" height="1" fill="#00ff00"/><rect x="185" y="425" width="1" height="4" fill="#22ff00"/><rect x="186" y="428" width="1" height="1" fill="#00ff00"/><rect x="187" y="427" width="1" height="2" fill="#00ff00"/><rect x="188" y="427" width="1" height="2" fill="#00ff00"/><rect x="189" y="428" width="1" height="1" fill="#00ff00"/><rect x="190" y="427" width="1" height="2" fill="#00ff00"/><rect x="191" y="426" width="1" height="3" fill="#00ff00"/><rect x="192" y="427" width="1" height="2" fill="#00ff00"/><rect x="193" y="427" width="1" height="2" fill="#00ff00"/><rect x="194" y="427" width="1" height="2" fill="#00ff00"/><rect x="195" y="427" width="1" height="2" fill="#00ff00"/><rect x="196" y="425" width="1" height="4" fill="#22ff00"/><rect x="197" y="428" width="1" height="1" fill="#00ff00"/><rect x="198" y="425" width="1" height="4" fill="#22ff00"/><rect x="199" y="427" width="1" height="2" fill="#00ff00"/><rect x="200" y="426" width="1" height="3" fill="#00ff00"/><rect x="201" y="428" width="1" height="1" fill="#00ff00"/><rect x="202" y="428" width="1" height="1" fill="#00ff00"/><rect x="203" y="428" width="1" height="1" fill="#00ff00"/><rect x="204" y="425" width="1" height="4" fill="#22ff00"/><rect x="205" y="424" width="1" height="5" fill="#44ff00"/><rect x="206" y="425" width="1" height="4" fill="#22ff00"/><rect x="207" y="427" width="1" height="2" fill="#00ff00"/><rect x="208" y="427" width="1" height="2" fill="#00ff00"/><rect x="209" y="427" width="1" height="2" fill="#00ff00"/><rect x="210" y="427" width="1" height="2" fill="#00ff00"/><rect x="211" y="428" width="1" height="1" fill="#00ff00"/><rect x="212" y="427" width="1" height="2" fill="#00ff00"/><rect x="213" y="428" width="1" height="1" fill="#00ff00"/><rect x="214" y="426" width="1" height="3" fill="#00ff00"/><rect x="215" y="427" width="1" height="2" fill="#00ff00"/><rect x="216" y="428" width="1" height="1" fill="#00ff00"/><rect x="217" y="423" width="1" height="6" fill="#66ff00"/><rect x="217" y="426" width="1" height="3" fill="#00ff00"/><rect x="218" y="427" width="1" height="2" fill="#00ff00"/><rect x="219" y="427" width="1" height="2" fill="#00ff00"/><rect x="220" y="428" width="1" height="1" fill="#00ff00"/><rect x="221" y="427" width="1" height="2" fill="#00ff00"/><rect x="222" y="427" width="1" height="2" fill="#00ff00"/><rect x="223" y="428" width="1" height="1" fill="#00ff00"/><rect x="224" y="427" width="1" height="2" fill="#00ff00"/><rect x="225" y="427" width="1" height="2" fill="#00ff00"/><rect x="226" y="428" width="1" height="1" fill="#00ff00"/><rect x="227" y="428" width="1" height="1" fill="#00ff00"/><rect x="228" y="425" width="1" height="4" fill="#22ff00"/><rect x="229" y="427" width="1" height="2" fill="#00ff00"/><rect x="230" y="427" width="1" height="2" fill="#00ff00"/><rect x="231" y="427" width="1" height="2" fill="#00ff00"/><rect x="232" y="427" width="1" height="2" fill="#00ff00"/><rect x="233" y="426" width="1" height="3" fill="#00ff00"/><rect x="234" y="428" width="1" height="1" fill="#00ff00"/><rect x="235" y="425" width="1" height="4" fill="#22ff00"/><rect x="236" y="428" width="1" height="1" fill="#00ff00"/><rect x="237" y="422" width="1" height="7" fill="#88ff00"/><rect x="237" y="424" width="1" height="5" fill="#44ff00"/><rect x="238" y="421" width="1" height="8" fill="#aaff00"/><rect x="238" y="425" width="1" height="4" fill="#22ff00"/><rect x="239" y="423" width="1" height="6" fill="#66ff00"/><rect x="239" y="425" width="1" height="4" fill="#22ff00"/><rect x="240" y="428" width="1" height="1" fill="#00ff00"/><rect x="241" y="425" width="1" height="4" fill="#22ff00"/><rect x="242" y="428" width="1" height="1" fill="#00ff00"/><rect x="243" y="428" width="1" height="1" fill="#00ff00"/><rect x="244" y="428" width="1" height="1" fill="#00ff00"/><rect x="245" y="427" width="1" height="2" fill="#00ff00"/><rect x="246" y="424" width="1" height="5" fill="#44ff00"/><rect x="247" y="423" width="1" height="6" fill="#66ff00"/><rect x="247" y="426" width="1" height="3" fill="#00ff00"/><rect x="248" y="422" width="1" height="7" fill="#88ff00"/><rect x="248" y="425" width="1" height="4" fill="#22ff00"/><rect x="249" y="421" width="1" height="8" fill="#aaff00"/><rect x="249" y="423" width="1" height="6" fill="#66ff00"/><rect x="250" y="420" width="1" height="9" fill="#bffb00"/><rect x="250" y="425" width="1" height="4" fill="#22ff00"/><rect x="251" y="420" width="1" height="9" fill="#bffb00"/><rect x="251" y="423" width="1" height="6" fill="#66ff00"/><rect x="252" y="313" width="1" height="116" fill="#ff1048"/><rect x="253" y="313" width="1" height="116" fill="#ff1048"/><rect x="254" y="373" width="1" height="56" fill="#ff1048"/><rect x="255" y="373" width="1" height="56" fill="#ff1048"/><rect x="256" y="389" width="1" height="40" fill="#ff1048"/><rect x="257" y="401" width="1" height="28" fill="#ff360a"/><rect x="257" y="412" width="1" height="17" fill="#ff9d00"/><rect x="258" y="409" width="1" height="20" fill="#ff7800"/><rect x="258" y="415" width="1" height="14" fill="#ffcf00"/><rect x="259" y="407" width="1" height="22" fill="#ff6400"/><rect x="259" y="417" width="1" height="12" fill="#fff000"/><rect x="260" y="418" width="1" height="11" fill="#eaf400"/><rect x="260" y="421" width="1" height="8" fill="#aaff00"/><rect x="261" y="418" width="1" height="11" fill="#eaf400"/><rect x="261" y="421" width="1" height="8" fill="#aaff00"/><rect x="262" y="418" width="1" height="11" fill="#eaf400"/><rect x="262" y="424" width="1" height="5" fill="#44ff00"/><rect x="263" y="421" width="1" height="8" fill="#aaff00"/><rect x="263" y="425" width="1" height="4" fill="#22ff00"/><rect x="264" y="421" width="1" height="8" fill="#aaff00"/><rect x="264" y="425" width="1" height="4" fill="#22ff00"/><rect x="265" y="412" width="1" height="17" fill="#ff9d00"/><rect x="265" y="417" width="1" height="12" fill="#fff000"/><rect x="266" y="418" width="1" height="11" fill="#eaf400"/><rect x="266" y="421" width="1" height="8" fill="#aaff00"/><rect x="267" y="418" width="1" height="11" fill="#eaf400"/><rect x="267" y="421" width="1" height="8" fill="#aaff00"/><rect x="268" y="421" width="1" height="8" fill="#aaff00"/><rect x="268" y="423" width="1" height="6" fill="#66ff00"/><rect x="269" y="428" width="1" height="1" fill="#00ff00"/><rect x="270" y="427" width="1" height="2" fill="#00ff00"/><rect x="271" y="428" width="1" height="1" fill="#00ff00"/><rect x="272" y="428" width="1" height="1" fill="#00ff00"/><rect x="273" y="426" width="1" height="3" fill="#00ff00"/><rect x="274" y="428" width="1" height="1" fill="#00ff00"/><rect x="275" y="428" width="1" height="1" fill="#00ff00"/><rect x="276" y="428" width="1" height="1" fill="#00ff00"/><rect x="277" y="428" width="1" height="1" fill="#00ff00"/><rect x="278" y="427" width="1" height="2" fill="#00ff00"/><rect x="279" y="426" width="1" height="3" fill="#00ff00"/><rect x="280" y="428" width="1" height="1" fill="#00ff00"/><rect x="281" y="427" width="1" height="2" fill="#00ff00"/><rect x="282" y="427" width="1" height="2" fill="#00ff00"/><rect x="283" y="426" width="1" height="3" fill="#00ff00"/><rect x="284" y="428" width="1" height="1" fill="#00ff00"/><rect x="285" y="428" width="1" height="1" fill="#00ff00"/><rect x="286" y="427" width="1" height="2" fill="#00ff00"/><rect x="287" y="426" width="1" height="3" fill="#00ff00"/><rect x="288" y="427" width="1" height="2" fill="#00ff00"/><rect x="289" y="428" width="1" height="1" fill="#00ff00"/><rect x="290" y="427" width="1" height="2" fill="#00ff00"/><rect x="291" y="425" width="1" height="4" fill="#22ff00"/><rect x="292" y="427" width="1" height="2" fill="#00ff00"/><rect x="293" y="425" width="1" height="4" fill="#22ff00"/><rect x="294" y="428" width="1" height="1" fill="#00ff00"/><rect x="295" y="425" width="1" height="4" fill="#22ff00"/><rect x="296" y="427" width="1" height="2" fill="#00ff00"/><rect x="297" y="425" width="1" height="4" fill="#22ff00"/><rect x="298" y="427" width="1" height="2" fill="#00ff00"/><rect x="299" y="428" width="1" height="1" fill="#00ff00"/><rect x="300" y="427" width="1" height="2" fill="#00ff00"/><rect x="301" y="426" width="1" height="3" fill="#00ff00"/><rect x="302" y="427" width="1" height="2" fill="#00ff00"/><rect x="303" y="424" width="1" height="5" fill="#44ff00"/><rect x="304" y="426" width="1" height="3" fill="#00ff00"/><rect x="305" y="427" width="1" height="2" fill="#00ff00"/><rect x="306" y="426" width="1" height="3" fill="#00ff00"/><rect x="307" y="427" width="1" height="2" fill="#00ff00"/><rect x="308" y="426" width="1" height="3" fill="#00ff00"/><rect x="309" y="427" width="1" height="2" fill="#00ff00"/><rect x="310" y="426" width="1" height="3" fill="#00ff00"/><rect x="311" y="423" width="1" height="6" fill="#66ff00"/><rect x="311" y="425" width="1" height="4" fill="#22ff00"/><rect x="312" y="426" width="1" height="3" fill="#00ff00"/><rect x="313" y="427" width="1" height="2" fill="#00ff00"/><rect x="314" y="427" width="1" height="2" fill="#00ff00"/><rect x="315" y="425" width="1" height="4" fill="#22ff00"/><rect x="316" y="424" width="1" height="5" fill="#44ff00"/><rect x="317" y="426" width="1" height="3" fill="#00ff00"/><rect x="318" y="426" width="1" height="3" fill="#00ff00"/><rect x="319" y="426" width="1" height="3" fill="#00ff00"/><rect x="320" y="427" width="1" height="2" fill="#00ff00"/><rect x="321" y="427" width="1" height="2" fill="#00ff00"/><rect x="322" y="424" width="1" height="5" fill="#44ff00"/><rect x="323" y="426" width="1" height="3" fill="#00ff00"/><rect x="324" y="426" width="1" height="3" fill="#00ff00"/><rect x="325" y="424" width="1" height="5" fill="#44ff00"/><rect x="326" y="426" width="1" height="3" fill="#00ff00"/><rect x="327" y="427" width="1" height="2" fill="#00ff00"/><rect x="328" y="427" width="1" height="2" fill="#00ff00"/><rect x="329" y="423" width="1" height="6" fill="#66ff00"/><rect x="329" y="425" width="1" height="4" fill="#22ff00"/><rect x="330" y="426" width="1" height="3" fill="#00ff00"/><rect x="331" y="426" width="1" height="3" fill="#00ff00"/><rect x="332" y="423" width="1" height="6" fill="#66ff00"/><rect x="332" y="426" width="1" height="3" fill="#00ff00"/><rect x="333" y="426" width="1" height="3" fill="#00ff00"/><rect x="334" y="426" width="1" height="3" fill="#00ff00"/><rect x="335" y="424" width="1" height="5" fill="#44ff00"/><rect x="336" y="426" width="1" height="3" fill="#00ff00"/><rect x="337" y="426" width="1" height="3" fill="#00ff00"/><rect x="338" y="426" width="1" height="3" fill="#00ff00"/><rect x="339" y="426" width="1" height="3" fill="#00ff00"/><rect x="340" y="423" width="1" height="6" fill="#66ff00"/><rect x="340" y="426" width="1" height="3" fill="#00ff00"/><rect x="341" y="426" width="1" height="3" fill="#00ff00"/><rect x="342" y="426" width="1" height="3" fill="#00ff00"/><rect x="343" y="426" width="1" height="3" fill="#00ff00"/><rect x="344" y="424" width="1" height="5" fill="#44ff00"/><rect x="345" y="426" width="1" height="3" fill="#00ff00"/><rect x="346" y="426" width="1" height="3" fill="#00ff00"/><rect x="347" y="427" width="1" height="2" fill="#00ff00"/><rect x="348" y="426" width="1" height="3" fill="#00ff00"/><rect x="349" y="426" width="1" height="3" fill="#00ff00"/><rect x="350" y="426" width="1" height="3" fill="#00ff00"/><rect x="351" y="424" width="1" height="5" fill="#44ff00"/><rect x="352" y="427" width="1" height="2" fill="#00ff00"/><rect x="353" y="426" width="1" height="3" fill="#00ff00"/><rect x="354" y="426" width="1" height="3" fill="#00ff00"/><rect x="355" y="426" width="1" height="3" fill="#00ff00"/><rect x="356" y="426" width="1" height="3" fill="#00ff00"/><rect x="357" y="426" width="1" height="3" fill="#00ff00"/><rect x="358" y="426" width="1" height="3" fill="#00ff00"/><rect x="359" y="426" width="1" height="3" fill="#00ff00"/><rect x="360" y="425" width="1" height="4" fill="#22ff00"/><rect x="361" y="426" width="1" height="3" fill="#00ff00"/><rect x="362" y="427" width="1" height="2" fill="#00ff00"/><rect x="363" y="426" width="1" height="3" fill="#00ff00"/><rect x="364" y="427" width="1" height="2" fill="#00ff00"/><rect x="365" y="426" width="1" height="3" fill="#00ff00"/><rect x="366" y="424" width="1" height="5" fill="#44ff00"/><rect x="367" y="425" width="1" height="4" fill="#22ff00"/><rect x="368" y="423" width="1" height="6" fill="#66ff00"/><rect x="368" y="425" width="1" height="4" fill="#22ff00"/><rect x="369" y="421" width="1" height="8" fill="#aaff00"/><rect x="369" y="424" width="1" height="5" fill="#44ff00"/><rect x="370" y="424" width="1" height="5" fill="#44ff00"/><rect x="371" y="427" width="1" height="2" fill="#00ff00"/><rect x="372" y="425" width="1" height="4" fill="#22ff00"/><rect x="373" y="427" width="1" height="2" fill="#00ff00"/><rect x="374" y="426" width="1" height="3" fill="#00ff00"/><rect x="375" y="426" width="1" height="3" fill="#00ff00"/><rect x="376" y="426" width="1" height="3" fill="#00ff00"/><rect x="377" y="427" width="1" height="2" fill="#00ff00"/><rect x="378" y="426" width="1" height="3" fill="#00ff00"/><rect x="379" y="427" width="1" height="2" fill="#00ff00"/><rect x="380" y="427" width="1" height="2" fill="#00ff00"/><rect x="381" y="427" width="1" height="2" fill="#00ff00"/><rect x="382" y="426" width="1" height="3" fill="#00ff00"/><rect x="383" y="426" width="1" height="3" fill="#00ff00"/><rect x="384" y="425" width="1" height="4" fill="#22ff00"/><rect x="385" y="426" width="1" height="3" fill="#00ff00"/><rect x="386" y="427" width="1" height="2" fill="#00ff00"/><rect x="387" y="427" width="1" height="2" fill="#00ff00"/><rect x="388" y="426" width="1" height="3" fill="#00ff00"/><rect x="389" y="427" width="1" height="2" fill="#00ff00"/><rect x="390" y="426" width="1" height="3" fill="#00ff00"/><rect x="391" y="427" width="1" height="2" fill="#00ff00"/><rect x="392" y="427" width="1" height="2" fill="#00ff00"/><rect x="393" y="426" width="1" height="3" fill="#00ff00"/><rect x="394" y="420" width="1" height="9" fill="#bffb00"/><rect x="394" y="425" width="1" height="4" fill="#22ff00"/><rect x="395" y="413" width="1" height="16" fill="#ffad00"/><rect x="395" y="418" width="1" height="11" fill="#eaf400"/><rect x="396" y="419" width="1" height="10" fill="#d4f800"/><rect x="396" y="424" width="1" height="5" fill="#44ff00"/><rect x="397" y="427" width="1" height="2" fill="#00ff00"/><rect x="398" y="425" width="1" height="4" fill="#22ff00"/><rect x="399" y="426" width="1" height="3" fill="#00ff00"/><rect x="400" y="426" width="1" height="3" fill="#00ff00"/><rect x="401" y="426" width="1" height="3" fill="#00ff00"/><rect x="402" y="426" width="1" height="3" fill="#00ff00"/><rect x="403" y="424" width="1" height="5" fill="#44ff00"/><rect x="404" y="427" width="1" height="2" fill="#00ff00"/><rect x="405" y="426" width="1" height="3" fill="#00ff00"/><rect x="406" y="424" width="1" height="5" fill="#44ff00"/><rect x="407" y="426" width="1" height="3" fill="#00ff00"/><rect x="408" y="426" width="1" height="3" fill="#00ff00"/><rect x="409" y="426" width="1" height="3" fill="#00ff00"/><rect x="410" y="425" width="1" height="4" fill="#22ff00"/><rect x="411" y="427" width="1" height="2" fill="#00ff00"/><rect x="412" y="424" width="1" height="5" fill="#44ff00"/><rect x="413" y="426" width="1" height="3" fill="#00ff00"/><rect x="414" y="426" width="1" height="3" fill="#00ff00"/><rect x="415" y="426" width="1" height="3" fill="#00ff00"/><rect x="416" y="426" width="1" height="3" fill="#00ff00"/><rect x="417" y="426" width="1" height="3" fill="#00ff00"/><rect x="418" y="426" width="1" height="3" fill="#00ff00"/><rect x="419" y="426" width="1" height="3" fill="#00ff00"/><rect x="420" y="426" width="1" height="3" fill="#00ff00"/><rect x="421" y="424" width="1" height="5" fill="#44ff00"/><rect x="422" y="426" width="1" height="3" fill="#00ff00"/><rect x="423" y="426" width="1" height="3" fill="#00ff00"/><rect x="424" y="426" width="1" height="3" fill="#00ff00"/><rect x="425" y="425" width="1" height="4" fill="#22ff00"/><rect x="426" y="426" width="1" height="3" fill="#00ff00"/><rect x="427" y="426" width="1" height="3" fill="#00ff00"/><rect x="428" y="426" width="1" height="3" fill="#00ff00"/><rect x="429" y="425" width="1" height="4" fill="#22ff00"/><rect x="430" y="423" width="1" height="6" fill="#66ff00"/><rect x="430" y="426" width="1" height="3" fill="#00ff00"/><rect x="431" y="425" width="1" height="4" fill="#22ff00"/><rect x="432" y="423" width="1" height="6" fill="#66ff00"/><rect x="432" y="426" width="1" height="3" fill="#00ff00"/><rect x="433" y="421" width="1" height="8" fill="#aaff00"/><rect x="433" y="424" width="1" height="5" fill="#44ff00"/><rect x="434" y="424" width="1" height="5" fill="#44ff00"/><rect x="435" y="426" width="1" height="3" fill="#00ff00"/><rect x="436" y="424" width="1" height="5" fill="#44ff00"/><rect x="437" y="427" width="1" height="2" fill="#00ff00"/><rect x="438" y="427" width="1" height="2" fill="#00ff00"/><rect x="439" y="426" width="1" height="3" fill="#00ff00"/><rect x="440" y="427" width="1" height="2" fill="#00ff00"/><rect x="441" y="426" width="1" height="3" fill="#00ff00"/><rect x="442" y="426" width="1" height="3" fill="#00ff00"/><rect x="443" y="427" width="1" height="2" fill="#00ff00"/><rect x="444" y="426" width="1" height="3" fill="#00ff00"/><rect x="445" y="427" width="1" height="2" fill="#00ff00"/><rect x="446" y="426" width="1" height="3" fill="#00ff00"/><rect x="447" y="426" width="1" height="3" fill="#00ff00"/><rect x="448" y="427" width="1" height="2" fill="#00ff00"/><rect x="449" y="427" width="1" height="2" fill="#00ff00"/><rect x="450" y="424" width="1" height="5" fill="#44ff00"/><rect x="451" y="424" width="1" height="5" fill="#44ff00"/><rect x="452" y="423" width="1" height="6" fill="#66ff00"/><rect x="452" y="426" width="1" height="3" fill="#00ff00"/><rect x="453" y="427" width="1" height="2" fill="#00ff00"/><rect x="454" y="426" width="1" height="3" fill="#00ff00"/><rect x="455" y="424" width="1" height="5" fill="#44ff00"/><rect x="456" y="427" width="1" height="2" fill="#00ff00"/><rect x="48" y="355" width="1" height="6" fill="#ff00ff"/><rect x="49" y="353" width="1" height="4" fill="#ff00ff"/><rect x="50" y="354" width="1" height="3" fill="#ff00ff"/><rect x="51" y="347" width="1" height="8" fill="#ff00ff"/><rect x="52" y="353" width="1" height="4" fill="#ff00ff"/><rect x="53" y="350" width="1" height="7" fill="#ff00ff"/><rect x="54" y="350" width="1" height="7" fill="#ff00ff"/><rect x="55" y="350" width="1" height="9" fill="#ff00ff"/><rect x="56" y="350" width="1" height="7" fill="#ff00ff"/><rect x="57" y="353" width="1" height="6" fill="#ff00ff"/><rect x="58" y="351" width="1" height="5" fill="#ff00ff"/><rect x="59" y="353" width="1" height="3" fill="#ff00ff"/><rect x="60" y="354" width="1" height="3" fill="#ff00ff"/><rect x="61" y="354" width="1" height="7" fill="#ff00ff"/><rect x="62" y="353" width="1" height="5" fill="#ff00ff"/><rect x="63" y="355" width="1" height="3" fill="#ff00ff"/><rect x="64" y="352" width="1" height="9" fill="#ff00ff"/><rect x="65" y="354" width="1" height="3" fill="#ff00ff"/><rect x="66" y="346" width="1" height="11" fill="#ff00ff"/><rect x="67" y="346" width="1" height="12" fill="#ff00ff"/><rect x="68" y="353" width="1" height="10" fill="#ff00ff"/><rect x="69" y="353" width="1" height="10" fill="#ff00ff"/><rect x="70" y="353" width="1" height="7" fill="#ff00ff"/><rect x="71" y="355" width="1" height="3" fill="#ff00ff"/><rect x="72" y="352" width="1" height="5" fill="#ff00ff"/><rect x="73" y="350" width="1" height="6" fill="#ff00ff"/><rect x="74" y="353" width="1" height="4" fill="#ff00ff"/><rect x="75" y="352" width="1" height="8" fill="#ff00ff"/><rect x="76" y="351" width="1" height="4" fill="#ff00ff"/><rect x="77" y="350" width="1" height="7" fill="#ff00ff"/><rect x="78" y="352" width="1" height="3" fill="#ff00ff"/><rect x="79" y="352" width="1" height="5" fill="#ff00ff"/><rect x="80" y="353" width="1" height="9" fill="#ff00ff"/><rect x="81" y="352" width="1" height="4" fill="#ff00ff"/><rect x="82" y="352" width="1" height="9" fill="#ff00ff"/><rect x="83" y="353" width="1" height="4" fill="#ff00ff"/><rect x="84" y="354" width="1" height="6" fill="#ff00ff"/><rect x="85" y="354" width="1" height="3" fill="#ff00ff"/><rect x="86" y="354" width="1" height="4" fill="#ff00ff"/><rect x="87" y="353" width="1" height="5" fill="#ff00ff"/><rect x="88" y="347" width="1" height="10" fill="#ff00ff"/><rect x="89" y="351" width="1" height="7" fill="#ff00ff"/><rect x="90" y="353" width="1" height="5" fill="#ff00ff"/><rect x="91" y="352" width="1" height="9" fill="#ff00ff"/><rect x="92" y="351" width="1" height="6" fill="#ff00ff"/><rect x="93" y="355" width="1" height="3" fill="#ff00ff"/><rect x="94" y="354" width="1" height="3" fill="#ff00ff"/><rect x="95" y="348" width="1" height="8" fill="#ff00ff"/><rect x="96" y="348" width="1" height="7" fill="#ff00ff"/><rect x="97" y="353" width="1" height="4" fill="#ff00ff"/><rect x="98" y="353" width="1" height="4" fill="#ff00ff"/><rect x="99" y="353" width="1" height="6" fill="#ff00ff"/><rect x="100" y="353" width="1" height="4" fill="#ff00ff"/><rect x="101" y="354" width="1" height="3" fill="#ff00ff"/><rect x="102" y="350" width="1" height="8" fill="#ff00ff"/><rect x="103" y="354" width="1" height="4" fill="#ff00ff"/><rect x="104" y="351" width="1" height="5" fill="#ff00ff"/><rect x="105" y="351" width="1" height="6" fill="#ff00ff"/><rect x="106" y="353" width="1" height="4" fill="#ff00ff"/><rect x="107" y="350" width="1" height="5" fill="#ff00ff"/><rect x="108" y="352" width="1" height="6" fill="#ff00ff"/><rect x="109" y="350" width="1" height="11" fill="#ff00ff"/><rect x="110" y="348" width="1" height="8" fill="#ff00ff"/><rect x="111" y="348" width="1" height="8" fill="#ff00ff"/><rect x="112" y="354" width="1" height="5" fill="#ff00ff"/><rect x="113" y="352" width="1" height="8" fill="#ff00ff"/><rect x="114" y="351" width="1" height="4" fill="#ff00ff"/><rect x="115" y="351" width="1" height="5" fill="#ff00ff"/><rect x="116" y="350" width="1" height="6" fill="#ff00ff"/><rect x="117" y="350" width="1" height="9" fill="#ff00ff"/><rect x="118" y="351" width="1" height="8" fill="#ff00ff"/><rect x="119" y="350" width="1" height="4" fill="#ff00ff"/><rect x="120" y="349" width="1" height="7" fill="#ff00ff"/><rect x="121" y="349" width="1" height="4" fill="#ff00ff"/><rect x="122" y="352" width="1" height="3" fill="#ff00ff"/><rect x="123" y="350" width="1" height="5" fill="#ff00ff"/><rect x="124" y="344" width="1" height="10" fill="#ff00ff"/><rect x="125" y="344" width="1" height="12" fill="#ff00ff"/><rect x="126" y="353" width="1" height="3" fill="#ff00ff"/><rect x="127" y="351" width="1" height="4" fill="#ff00ff"/><rect x="128" y="352" width="1" height="4" fill="#ff00ff"/><rect x="129" y="352" width="1" height="4" fill="#ff00ff"/><rect x="130" y="350" width="1" height="5" fill="#ff00ff"/><rect x="131" y="351" width="1" height="4" fill="#ff00ff"/><rect x="132" y="351" width="1" height="4" fill="#ff00ff"/><rect x="133" y="350" width="1" height="4" fill="#ff00ff"/><rect x="134" y="350" width="1" height="5" fill="#ff00ff"/><rect x="135" y="349" width="1" height="5" fill="#ff00ff"/><rect x="136" y="351" width="1" height="5" fill="#ff00ff"/><rect x="137" y="352" width="1" height="3" fill="#ff00ff"/><rect x="138" y="351" width="1" height="4" fill="#ff00ff"/><rect x="139" y="348" width="1" height="6" fill="#ff00ff"/><rect x="140" y="352" width="1" height="3" fill="#ff00ff"/><rect x="141" y="353" width="1" height="5" fill="#ff00ff"/><rect x="142" y="350" width="1" height="8" fill="#ff00ff"/><rect x="143" y="350" width="1" height="5" fill="#ff00ff"/><rect x="144" y="349" width="1" height="5" fill="#ff00ff"/><rect x="145" y="351" width="1" height="4" fill="#ff00ff"/><rect x="146" y="351" width="1" height="5" fill="#ff00ff"/><rect x="147" y="348" width="1" height="7" fill="#ff00ff"/><rect x="148" y="348" width="1" height="7" fill="#ff00ff"/><rect x="149" y="350" width="1" height="5" fill="#ff00ff"/><rect x="150" y="347" width="1" height="10" fill="#ff00ff"/><rect x="151" y="347" width="1" height="7" fill="#ff00ff"/><rect x="152" y="346" width="1" height="8" fill="#ff00ff"/><rect x="153" y="350" width="1" height="4" fill="#ff00ff"/><rect x="154" y="344" width="1" height="9" fill="#ff00ff"/><rect x="155" y="349" width="1" height="4" fill="#ff00ff"/><rect x="156" y="351" width="1" height="4" fill="#ff00ff"/><rect x="157" y="350" width="1" height="5" fill="#ff00ff"/><rect x="158" y="351" width="1" height="4" fill="#ff00ff"/><rect x="159" y="349" width="1" height="12" fill="#ff00ff"/><rect x="160" y="346" width="1" height="10" fill="#ff00ff"/><rect x="161" y="351" width="1" height="5" fill="#ff00ff"/><rect x="162" y="351" width="1" height="3" fill="#ff00ff"/><rect x="163" y="350" width="1" height="4" fill="#ff00ff"/><rect x="164" y="350" width="1" height="4" fill="#ff00ff"/><rect x="165" y="346" width="1" height="9" fill="#ff00ff"/><rect x="166" y="350" width="1" height="3" fill="#ff00ff"/><rect x="167" y="350" width="1" height="4" fill="#ff00ff"/><rect x="168" y="352" width="1" height="3" fill="#ff00ff"/><rect x="169" y="348" width="1" height="7" fill="#ff00ff"/><rect x="170" y="349" width="1" height="4" fill="#ff00ff"/><rect x="171" y="348" width="1" height="5" fill="#ff00ff"/><rect x="172" y="349" width="1" height="5" fill="#ff00ff"/><rect x="173" y="345" width="1" height="7" fill="#ff00ff"/><rect x="174" y="351" width="1" height="3" fill="#ff00ff"/><rect x="175" y="350" width="1" height="3" fill="#ff00ff"/><rect x="176" y="349" width="1" height="3" fill="#ff00ff"/><rect x="177" y="350" width="1" height="5" fill="#ff00ff"/><rect x="178" y="350" width="1" height="3" fill="#ff00ff"/><rect x="179" y="350" width="1" height="3" fill="#ff00ff"/><rect x="180" y="350" width="1" height="3" fill="#ff00ff"/><rect x="181" y="350" width="1" height="3" fill="#ff00ff"/><rect x="182" y="351" width="1" height="3" fill="#ff00ff"/><rect x="183" y="350" width="1" height="3" fill="#ff00ff"/><rect x="184" y="349" width="1" height="3" fill="#ff00ff"/><rect x="185" y="350" width="1" height="4" fill="#ff00ff"/><rect x="186" y="350" width="1" height="4" fill="#ff00ff"/><rect x="187" y="346" width="1" height="6" fill="#ff00ff"/><rect x="188" y="349" width="1" height="4" fill="#ff00ff"/><rect x="189" y="346" width="1" height="7" fill="#ff00ff"/><rect x="190" y="349" width="1" height="3" fill="#ff00ff"/><rect x="191" y="348" width="1" height="4" fill="#ff00ff"/><rect x="192" y="347" width="1" height="5" fill="#ff00ff"/><rect x="193" y="349" width="1" height="6" fill="#ff00ff"/><rect x="194" y="349" width="1" height="6" fill="#ff00ff"/><rect x="195" y="345" width="1" height="7" fill="#ff00ff"/><rect x="196" y="347" width="1" height="5" fill="#ff00ff"/><rect x="197" y="345" width="1" height="6" fill="#ff00ff"/><rect x="198" y="349" width="1" height="3" fill="#ff00ff"/><rect x="199" y="347" width="1" height="5" fill="#ff00ff"/><rect x="200" y="348" width="1" height="6" fill="#ff00ff"/><rect x="201" y="349" width="1" height="5" fill="#ff00ff"/><rect x="202" y="349" width="1" height="3" fill="#ff00ff"/><rect x="203" y="349" width="1" height="4" fill="#ff00ff"/><rect x="204" y="347" width="1" height="6" fill="#ff00ff"/><rect x="205" y="347" width="1" height="5" fill="#ff00ff"/><rect x="206" y="349" width="1" height="3" fill="#ff00ff"/><rect x="207" y="345" width="1" height="6" fill="#ff00ff"/><rect x="208" y="342" width="1" height="11" fill="#ff00ff"/><rect x="209" y="342" width="1" height="9" fill="#ff00ff"/><rect x="210" y="346" width="1" height="5" fill="#ff00ff"/><rect x="211" y="346" width="1" height="6" fill="#ff00ff"/><rect x="212" y="346" width="1" height="5" fill="#ff00ff"/><rect x="213" y="349" width="1" height="3" fill="#ff00ff"/><rect x="214" y="348" width="1" height="4" fill="#ff00ff"/><rect x="215" y="346" width="1" height="5" fill="#ff00ff"/><rect x="216" y="346" width="1" height="7" fill="#ff00ff"/><rect x="217" y="344" width="1" height="7" fill="#ff00ff"/><rect x="218" y="349" width="1" height="3" fill="#ff00ff"/><rect x="219" y="348" width="1" height="3" fill="#ff00ff"/><rect x="220" y="343" width="1" height="8" fill="#ff00ff"/><rect x="221" y="346" width="1" height="4" fill="#ff00ff"/><rect x="222" y="346" width="1" height="4" fill="#ff00ff"/><rect x="223" y="345" width="1" height="5" fill="#ff00ff"/><rect x="224" y="348" width="1" height="4" fill="#ff00ff"/><rect x="225" y="343" width="1" height="7" fill="#ff00ff"/><rect x="226" y="343" width="1" height="10" fill="#ff00ff"/><rect x="227" y="347" width="1" height="5" fill="#ff00ff"/><rect x="228" y="349" width="1" height="3" fill="#ff00ff"/><rect x="229" y="347" width="1" height="6" fill="#ff00ff"/><rect x="230" y="347" width="1" height="6" fill="#ff00ff"/><rect x="231" y="347" width="1" height="5" fill="#ff00ff"/><rect x="232" y="344" width="1" height="7" fill="#ff00ff"/><rect x="233" y="344" width="1" height="7" fill="#ff00ff"/><rect x="234" y="346" width="1" height="5" fill="#ff00ff"/><rect x="235" y="345" width="1" height="7" fill="#ff00ff"/><rect x="236" y="345" width="1" height="5" fill="#ff00ff"/><rect x="237" y="345" width="1" height="6" fill="#ff00ff"/><rect x="238" y="347" width="1" height="4" fill="#ff00ff"/><rect x="239" y="345" width="1" height="5" fill="#ff00ff"/><rect x="240" y="345" width="1" height="5" fill="#ff00ff"/><rect x="241" y="347" width="1" height="4" fill="#ff00ff"/><rect x="242" y="340" width="1" height="11" fill="#ff00ff"/><rect x="243" y="347" width="1" height="6" fill="#ff00ff"/><rect x="244" y="347" width="1" height="5" fill="#ff00ff"/><rect x="245" y="347" width="1" height="3" fill="#ff00ff"/><rect x="246" y="345" width="1" height="3" fill="#ff00ff"/><rect x="247" y="346" width="1" height="3" fill="#ff00ff"/><rect x="248" y="345" width="1" height="9" fill="#ff00ff"/><rect x="249" y="340" width="1" height="6" fill="#ff00ff"/><rect x="250" y="338" width="1" height="5" fill="#ff00ff"/><rect x="251" y="327" width="1" height="5" fill="#ff00ff"/><rect x="252" y="313" width="1" height="5" fill="#ff00ff"/><rect x="253" y="316" width="1" height="5" fill="#ff00ff"/><rect x="254" y="323" width="1" height="5" fill="#ff00ff"/><rect x="255" y="321" width="1" height="5" fill="#ff00ff"/><rect x="256" y="327" width="1" height="5" fill="#ff00ff"/><rect x="257" y="327" width="1" height="7" fill="#ff00ff"/><rect x="258" y="328" width="1" height="8" fill="#ff00ff"/><rect x="259" y="328" width="1" height="9" fill="#ff00ff"/><rect x="260" y="331" width="1" height="7" fill="#ff00ff"/><rect x="261" y="332" width="1" height="4" fill="#ff00ff"/><rect x="262" y="332" width="1" height="7" fill="#ff00ff"/><rect x="263" y="333" width="1" height="6" fill="#ff00ff"/><rect x="264" y="335" width="1" height="3" fill="#ff00ff"/><rect x="265" y="334" width="1" height="3" fill="#ff00ff"/><rect x="266" y="336" width="1" height="3" fill="#ff00ff"/><rect x="267" y="336" width="1" height="3" fill="#ff00ff"/><rect x="268" y="334" width="1" height="7" fill="#ff00ff"/><rect x="269" y="332" width="1" height="8" fill="#ff00ff"/><rect x="270" y="332" width="1" height="6" fill="#ff00ff"/><rect x="271" y="328" width="1" height="10" fill="#ff00ff"/><rect x="272" y="332" width="1" height="7" fill="#ff00ff"/><rect x="273" y="336" width="1" height="5" fill="#ff00ff"/><rect x="274" y="336" width="1" height="4" fill="#ff00ff"/><rect x="275" y="337" width="1" height="6" fill="#ff00ff"/><rect x="276" y="340" width="1" height="3" fill="#ff00ff"/><rect x="277" y="339" width="1" height="3" fill="#ff00ff"/><rect x="278" y="337" width="1" height="4" fill="#ff00ff"/><rect x="279" y="338" width="1" height="5" fill="#ff00ff"/><rect x="280" y="341" width="1" height="4" fill="#ff00ff"/><rect x="281" y="338" width="1" height="7" fill="#ff00ff"/><rect x="282" y="340" width="1" height="4" fill="#ff00ff"/><rect x="283" y="339" width="1" height="3" fill="#ff00ff"/><rect x="284" y="339" width="1" height="6" fill="#ff00ff"/><rect x="285" y="339" width="1" height="6" fill="#ff00ff"/><rect x="286" y="340" width="1" height="5" fill="#ff00ff"/><rect x="287" y="340" width="1" height="4" fill="#ff00ff"/><rect x="288" y="342" width="1" height="3" fill="#ff00ff"/><rect x="289" y="342" width="1" height="4" fill="#ff00ff"/><rect x="290" y="344" width="1" height="3" fill="#ff00ff"/><rect x="291" y="333" width="1" height="12" fill="#ff00ff"/><rect x="292" y="340" width="1" height="6" fill="#ff00ff"/><rect x="293" y="342" width="1" height="5" fill="#ff00ff"/><rect x="294" y="342" width="1" height="4" fill="#ff00ff"/><rect x="295" y="341" width="1" height="5" fill="#ff00ff"/><rect x="296" y="344" width="1" height="3" fill="#ff00ff"/><rect x="297" y="342" width="1" height="6" fill="#ff00ff"/><rect x="298" y="340" width="1" height="10" fill="#ff00ff"/><rect x="299" y="343" width="1" height="3" fill="#ff00ff"/><rect x="300" y="341" width="1" height="5" fill="#ff00ff"/><rect x="301" y="342" width="1" height="4" fill="#ff00ff"/><rect x="302" y="342" width="1" height="5" fill="#ff00ff"/><rect x="303" y="342" width="1" height="7" fill="#ff00ff"/><rect x="304" y="343" width="1" height="6" fill="#ff00ff"/><rect x="305" y="343" width="1" height="5" fill="#ff00ff"/><rect x="306" y="343" width="1" height="3" fill="#ff00ff"/><rect x="307" y="343" width="1" height="3" fill="#ff00ff"/><rect x="308" y="344" width="1" height="5" fill="#ff00ff"/><rect x="309" y="343" width="1" height="5" fill="#ff00ff"/><rect x="310" y="343" width="1" height="7" fill="#ff00ff"/><rect x="311" y="344" width="1" height="6" fill="#ff00ff"/><rect x="312" y="345" width="1" height="3" fill="#ff00ff"/><rect x="313" y="345" width="1" height="3" fill="#ff00ff"/><rect x="314" y="345" width="1" height="3" fill="#ff00ff"/><rect x="315" y="347" width="1" height="3" fill="#ff00ff"/><rect x="316" y="343" width="1" height="8" fill="#ff00ff"/><rect x="317" y="344" width="1" height="8" fill="#ff00ff"/><rect x="318" y="347" width="1" height="5" fill="#ff00ff"/><rect x="319" y="344" width="1" height="7" fill="#ff00ff"/><rect x="320" y="344" width="1" height="6" fill="#ff00ff"/><rect x="321" y="343" width="1" height="7" fill="#ff00ff"/><rect x="322" y="343" width="1" height="3" fill="#ff00ff"/><rect x="323" y="343" width="1" height="6" fill="#ff00ff"/><rect x="324" y="344" width="1" height="5" fill="#ff00ff"/><rect x="325" y="346" width="1" height="3" fill="#ff00ff"/><rect x="326" y="346" width="1" height="4" fill="#ff00ff"/><rect x="327" y="345" width="1" height="6" fill="#ff00ff"/><rect x="328" y="346" width="1" height="5" fill="#ff00ff"/><rect x="329" y="342" width="1" height="6" fill="#ff00ff"/><rect x="330" y="342" width="1" height="8" fill="#ff00ff"/><rect x="331" y="341" width="1" height="9" fill="#ff00ff"/><rect x="332" y="342" width="1" height="11" fill="#ff00ff"/><rect x="333" y="344" width="1" height="9" fill="#ff00ff"/><rect x="334" y="346" width="1" height="4" fill="#ff00ff"/><rect x="335" y="348" width="1" height="3" fill="#ff00ff"/><rect x="336" y="345" width="1" height="5" fill="#ff00ff"/><rect x="337" y="344" width="1" height="6" fill="#ff00ff"/><rect x="338" y="344" width="1" height="4" fill="#ff00ff"/><rect x="339" y="347" width="1" height="5" fill="#ff00ff"/><rect x="340" y="341" width="1" height="12" fill="#ff00ff"/><rect x="341" y="343" width="1" height="8" fill="#ff00ff"/><rect x="342" y="343" width="1" height="8" fill="#ff00ff"/><rect x="343" y="347" width="1" height="5" fill="#ff00ff"/><rect x="344" y="341" width="1" height="11" fill="#ff00ff"/><rect x="345" y="348" width="1" height="6" fill="#ff00ff"/><rect x="346" y="347" width="1" height="6" fill="#ff00ff"/><rect x="347" y="347" width="1" height="4" fill="#ff00ff"/><rect x="348" y="347" width="1" height="4" fill="#ff00ff"/><rect x="349" y="349" width="1" height="5" fill="#ff00ff"/><rect x="350" y="348" width="1" height="7" fill="#ff00ff"/><rect x="351" y="348" width="1" height="4" fill="#ff00ff"/><rect x="352" y="349" width="1" height="3" fill="#ff00ff"/><rect x="353" y="349" width="1" height="3" fill="#ff00ff"/><rect x="354" y="349" width="1" height="4" fill="#ff00ff"/><rect x="355" y="349" width="1" height="5" fill="#ff00ff"/><rect x="356" y="347" width="1" height="7" fill="#ff00ff"/><rect x="357" y="350" width="1" height="4" fill="#ff00ff"/><rect x="358" y="350" width="1" height="5" fill="#ff00ff"/><rect x="359" y="351" width="1" height="4" fill="#ff00ff"/><rect x="360" y="351" width="1" height="7" fill="#ff00ff"/><rect x="361" y="350" width="1" height="4" fill="#ff00ff"/><rect x="362" y="350" width="1" height="6" fill="#ff00ff"/><rect x="363" y="349" width="1" height="4" fill="#ff00ff"/><rect x="364" y="348" width="1" height="5" fill="#ff00ff"/><rect x="365" y="351" width="1" height="4" fill="#ff00ff"/><rect x="366" y="350" width="1" height="5" fill="#ff00ff"/><rect x="367" y="343" width="1" height="8" fill="#ff00ff"/><rect x="368" y="344" width="1" height="8" fill="#ff00ff"/><rect x="369" y="348" width="1" height="5" fill="#ff00ff"/><rect x="370" y="348" width="1" height="7" fill="#ff00ff"/><rect x="371" y="352" width="1" height="4" fill="#ff00ff"/><rect x="372" y="350" width="1" height="5" fill="#ff00ff"/><rect x="373" y="347" width="1" height="8" fill="#ff00ff"/><rect x="374" y="347" width="1" height="7" fill="#ff00ff"/><rect x="375" y="344" width="1" height="10" fill="#ff00ff"/><rect x="376" y="350" width="1" height="4" fill="#ff00ff"/><rect x="377" y="350" width="1" height="5" fill="#ff00ff"/><rect x="378" y="350" width="1" height="5" fill="#ff00ff"/><rect x="379" y="350" width="1" height="4" fill="#ff00ff"/><rect x="380" y="350" width="1" height="6" fill="#ff00ff"/><rect x="381" y="353" width="1" height="4" fill="#ff00ff"/><rect x="382" y="351" width="1" height="4" fill="#ff00ff"/><rect x="383" y="352" width="1" height="3" fill="#ff00ff"/><rect x="384" y="348" width="1" height="9" fill="#ff00ff"/><rect x="385" y="348" width="1" height="9" fill="#ff00ff"/><rect x="386" y="351" width="1" height="6" fill="#ff00ff"/><rect x="387" y="351" width="1" height="7" fill="#ff00ff"/><rect x="388" y="352" width="1" height="6" fill="#ff00ff"/><rect x="389" y="353" width="1" height="3" fill="#ff00ff"/><rect x="390" y="352" width="1" height="3" fill="#ff00ff"/><rect x="391" y="352" width="1" height="4" fill="#ff00ff"/><rect x="392" y="347" width="1" height="10" fill="#ff00ff"/><rect x="393" y="350" width="1" height="4" fill="#ff00ff"/><rect x="394" y="352" width="1" height="4" fill="#ff00ff"/><rect x="395" y="353" width="1" height="4" fill="#ff00ff"/><rect x="396" y="345" width="1" height="12" fill="#ff00ff"/><rect x="397" y="352" width="1" height="7" fill="#ff00ff"/><rect x="398" y="353" width="1" height="6" fill="#ff00ff"/><rect x="399" y="353" width="1" height="3" fill="#ff00ff"/><rect x="400" y="353" width="1" height="4" fill="#ff00ff"/><rect x="401" y="351" width="1" height="5" fill="#ff00ff"/><rect x="402" y="352" width="1" height="3" fill="#ff00ff"/><rect x="403" y="352" width="1" height="4" fill="#ff00ff"/><rect x="404" y="354" width="1" height="3" fill="#ff00ff"/><rect x="405" y="351" width="1" height="5" fill="#ff00ff"/><rect x="406" y="352" width="1" height="6" fill="#ff00ff"/><rect x="407" y="356" width="1" height="3" fill="#ff00ff"/><rect x="408" y="354" width="1" height="4" fill="#ff00ff"/><rect x="409" y="353" width="1" height="5" fill="#ff00ff"/><rect x="410" y="352" width="1" height="6" fill="#ff00ff"/><rect x="411" y="353" width="1" height="4" fill="#ff00ff"/><rect x="412" y="353" width="1" height="4" fill="#ff00ff"/><rect x="413" y="350" width="1" height="4" fill="#ff00ff"/><rect x="414" y="350" width="1" height="8" fill="#ff00ff"/><rect x="415" y="354" width="1" height="6" fill="#ff00ff"/><rect x="416" y="353" width="1" height="4" fill="#ff00ff"/><rect x="417" y="354" width="1" height="5" fill="#ff00ff"/><rect x="418" y="355" width="1" height="4" fill="#ff00ff"/><rect x="419" y="352" width="1" height="6" fill="#ff00ff"/><rect x="420" y="355" width="1" height="3" fill="#ff00ff"/><rect x="421" y="356" width="1" height="3" fill="#ff00ff"/><rect x="422" y="356" width="1" height="3" fill="#ff00ff"/><rect x="423" y="354" width="1" height="6" fill="#ff00ff"/><rect x="424" y="354" width="1" height="6" fill="#ff00ff"/><rect x="425" y="354" width="1" height="3" fill="#ff00ff"/><rect x="426" y="354" width="1" height="3" fill="#ff00ff"/><rect x="427" y="350" width="1" height="7" fill="#ff00ff"/><rect x="428" y="350" width="1" height="8" fill="#ff00ff"/><rect x="429" y="354" width="1" height="4" fill="#ff00ff"/><rect x="430" y="352" width="1" height="10" fill="#ff00ff"/><rect x="431" y="356" width="1" height="6" fill="#ff00ff"/><rect x="432" y="355" width="1" height="5" fill="#ff00ff"/><rect x="433" y="355" width="1" height="3" fill="#ff00ff"/><rect x="434" y="353" width="1" height="4" fill="#ff00ff"/><rect x="435" y="352" width="1" height="6" fill="#ff00ff"/><rect x="436" y="352" width="1" height="7" fill="#ff00ff"/><rect x="437" y="356" width="1" height="8" fill="#ff00ff"/><rect x="438" y="355" width="1" height="9" fill="#ff00ff"/><rect x="439" y="355" width="1" height="5" fill="#ff00ff"/><rect x="440" y="355" width="1" height="3" fill="#ff00ff"/><rect x="441" y="355" width="1" height="3" fill="#ff00ff"/><rect x="442" y="354" width="1" height="5" fill="#ff00ff"/><rect x="443" y="354" width="1" height="5" fill="#ff00ff"/><rect x="444" y="353" width="1" height="8" fill="#ff00ff"/><rect x="445" y="354" width="1" height="7" fill="#ff00ff"/><rect x="446" y="356" width="1" height="3" fill="#ff00ff"/><rect x="447" y="355" width="1" height="4" fill="#ff00ff"/><rect x="448" y="356" width="1" height="3" fill="#ff00ff"/><rect x="449" y="355" width="1" height="5" fill="#ff00ff"/><rect x="450" y="356" width="1" height="6" fill="#ff00ff"/><rect x="451" y="358" width="1" height="4" fill="#ff00ff"/><rect x="452" y="356" width="1" height="3" fill="#ff00ff"/><rect x="453" y="354" width="1" height="5" fill="#ff00ff"/><rect x="454" y="349" width="1" height="10" fill="#ff00ff"/><rect x="455" y="351" width="1" height="8" fill="#ff00ff"/><rect x="456" y="295" width="1" height="134" fill="#e8e8e8"/></svg>
<div class="t" style="right:599px;top:126px;">1000</div>
<div class="t" style="right:599px;top:153px;">800</div>
<div class="t" style="right:599px;top:180px;">600</div>
<div class="t" style="right:599px;top:206px;">400</div>
<div class="t" style="right:599px;top:233px;">200</div>
<div class="t" style="right:599px;top:288px;">200</div>
<div class="t" style="right:599px;top:315px;">160</div>
<div class="t" style="right:599px;top:342px;">120</div>
<div class="t" style="right:599px;top:368px;">80</div>
<div class="t" style="right:599px;top:395px;">40</div>
<div class="t" style="left:471px;top:126px;">16</div>
<div class="t" style="left:471px;top:143px;">14</div>
<div class="t" style="left:471px;top:160px;">12</div>
<div class="t" style="left:471px;top:176px;">10</div>
<div class="t" style="left:471px;top:193px;">8</div>
<div class="t" style="left:471px;top:210px;">6</div>
<div class="t" style="left:471px;top:226px;">4</div>
<div class="t" style="left:471px;top:243px;">2</div>
<div class="t" style="left:471px;top:288px;">20</div>
<div class="t" style="left:471px;top:315px;">16</div>
<div class="t" style="left:471px;top:342px;">12</div>
<div class="t" style="left:471px;top:368px;">8</div>
<div class="t" style="left:471px;top:395px;">4</div>
<div class="t" style="left:35px;top:270px;width:30px;text-align:center">0.0</div>
<div class="t" style="left:35px;top:432px;width:30px;text-align:center">0.0</div>
<div class="t" style="left:87px;top:270px;width:30px;text-align:center">1.0</div>
<div class="t" style="left:87px;top:432px;width:30px;text-align:center">1.0</div>
<div class="t" style="left:139px;top:270px;width:30px;text-align:center">2.0</div>
<div class="t" style="left:139px;top:432px;width:30px;text-align:center">2.0</div>
<div class="t" style="left:191px;top:270px;width:30px;text-align:center">3.0</div>
<div class="t" style="left:191px;top:432px;width:30px;text-align:center">3.0</div>
<div class="t" style="left:244px;top:270px;width:30px;text-align:center">4.0</div>
<div class="t" style="left:244px;top:432px;width:30px;text-align:center">4.0</div>
<div class="t" style="left:296px;top:270px;width:30px;text-align:center">5.0</div>
<div class="t" style="left:296px;top:432px;width:30px;text-align:center">5.0</div>
<div class="t" style="left:348px;top:270px;width:30px;text-align:center">6.0</div>
<div class="t" style="left:348px;top:432px;width:30px;text-align:center">6.0</div>
<div class="t" style="left:400px;top:270px;width:30px;text-align:center">7.0</div>
<div class="t" style="left:400px;top:432px;width:30px;text-align:center">7.0</div>
<div class="t" style="left:453px;top:270px;width:30px;text-align:center">8.0</div>
<div class="t" style="left:453px;top:432px;width:30px;text-align:center">8.0</div>
<div style="position:absolute;left:492px;top:127px;width:139px;height:84px;border:1px solid #fff;box-sizing:border-box"></div>
<div style="position:absolute;left:491px;top:126px;width:139px;height:84px;border:1px solid #808080;box-sizing:border-box"></div>
<div class="t" style="left:498px;top:122px;background:#d4d0c8;padding:0 2px 0 2px">Disc info</div>
<div class="t" style="left:500px;top:135px;">Type:</div>
<div class="t" style="left:545px;top:135px;color:#000080">DVD+R DL</div>
<div class="t" style="left:500px;top:152px;">ID:</div>
<div class="t" style="left:545px;top:152px;color:#000080">RITEK D01</div>
<div class="t" style="left:500px;top:170px;">Date:</div>
<div class="t" style="left:545px;top:170px;color:#000080">29 Apr 2006</div>
<div class="t" style="left:500px;top:188px;">Label:</div>
<div class="t" style="left:545px;top:188px;color:#000080">New</div>
<div style="position:absolute;left:492px;top:218px;width:139px;height:203px;border:1px solid #fff;box-sizing:border-box"></div>
<div style="position:absolute;left:491px;top:217px;width:139px;height:203px;border:1px solid #808080;box-sizing:border-box"></div>
<div class="t" style="left:498px;top:213px;background:#d4d0c8;padding:0 2px 0 2px">Settings</div>
<div class="t" style="left:500px;top:226px;">Speed:</div>
<div style="position:absolute;left:500px;top:242px;width:84px;height:21px;box-shadow:inset -1px -1px #fff, inset 1px 1px #808080, inset -2px -2px #d4d0c8, inset 2px 2px #404040;background:#fff"></div>
<div class="t" style="left:504px;top:246px;">8 X</div>
<div style="position:absolute;left:566px;top:244px;width:16px;height:17px;box-shadow:inset -1px -1px #404040, inset 1px 1px #fff, inset -2px -2px #808080, inset 2px 2px #d4d0c8;background:#d4d0c8;"></div>
<svg style="position:absolute;left:566px;top:244px" width="16" height="17"><path d="M4 7h7l-3.5 4z" fill="#000"/></svg>
<div style="position:absolute;left:592px;top:240px;width:23px;height:24px;box-shadow:inset -1px -1px #404040, inset 1px 1px #fff, inset -2px -2px #808080, inset 2px 2px #d4d0c8;background:#d4d0c8;"></div>
<svg style="position:absolute;left:596px;top:243px" width="15" height="17" viewBox="0 0 15 17"><rect x="0.5" y="0.5" width="13" height="15" fill="#fff" stroke="#000"/><path d="M3.5 9 V6.5 Q3.5 5 5 5 H8" fill="none" stroke="#008000" stroke-width="1.4"/><path d="M7.5 2 L10.5 5 L7.5 8 Z" fill="#008000"/><path d="M10.5 7.5 V10 Q10.5 11.5 9 11.5 H6" fill="none" stroke="#008000" stroke-width="1.4"/><path d="M6.5 8.5 L3.5 11.5 L6.5 14.5 Z" fill="#008000"/></svg>
<div class="t" style="left:502px;top:273px;">Start:</div>
<div style="position:absolute;left:554px;top:268px;width:60px;height:20px;box-shadow:inset -1px -1px #fff, inset 1px 1px #808080, inset -2px -2px #d4d0c8, inset 2px 2px #404040;background:#fff"></div>
<div class="t" style="left:558px;top:271px;">0000 MB</div>
<div class="t" style="left:502px;top:295px;">End:</div>
<div style="position:absolute;left:554px;top:291px;width:60px;height:20px;box-shadow:inset -1px -1px #fff, inset 1px 1px #808080, inset -2px -2px #d4d0c8, inset 2px 2px #404040;background:#fff"></div>
<div class="t" style="left:558px;top:294px;">8000 MB</div>
<div style="position:absolute;left:502px;top:316px;width:13px;height:13px;box-shadow:inset -1px -1px #fff, inset 1px 1px #808080, inset -2px -2px #d4d0c8, inset 2px 2px #404040;background:#fff"></div>
<div class="t" style="left:520px;top:316px;">Quick scan</div>
<div style="position:absolute;left:502px;top:337px;width:13px;height:13px;box-shadow:inset -1px -1px #fff, inset 1px 1px #808080, inset -2px -2px #d4d0c8, inset 2px 2px #404040;background:#fff"></div>
<svg style="position:absolute;left:502px;top:337px" width="13" height="13" shape-rendering="crispEdges"><path d="M3 5h1v3h-1z M4 6h1v3h-1z M5 7h1v3h-1z M6 6h1v3h-1z M7 5h1v3h-1z M8 4h1v3h-1z M9 3h1v3h-1z" fill="#000"/></svg>
<div class="t" style="left:520px;top:337px;">Show C1/PIE</div>
<div style="position:absolute;left:502px;top:353px;width:13px;height:13px;box-shadow:inset -1px -1px #fff, inset 1px 1px #808080, inset -2px -2px #d4d0c8, inset 2px 2px #404040;background:#fff"></div>
<svg style="position:absolute;left:502px;top:353px" width="13" height="13" shape-rendering="crispEdges"><path d="M3 5h1v3h-1z M4 6h1v3h-1z M5 7h1v3h-1z M6 6h1v3h-1z M7 5h1v3h-1z M8 4h1v3h-1z M9 3h1v3h-1z" fill="#000"/></svg>
<div class="t" style="left:520px;top:353px;">Show C2/PIF</div>
<div style="position:absolute;left:502px;top:370px;width:13px;height:13px;box-shadow:inset -1px -1px #fff, inset 1px 1px #808080, inset -2px -2px #d4d0c8, inset 2px 2px #404040;background:#fff"></div>
<svg style="position:absolute;left:502px;top:370px" width="13" height="13" shape-rendering="crispEdges"><path d="M3 5h1v3h-1z M4 6h1v3h-1z M5 7h1v3h-1z M6 6h1v3h-1z M7 5h1v3h-1z M8 4h1v3h-1z M9 3h1v3h-1z" fill="#000"/></svg>
<div class="t" style="left:520px;top:370px;">Show jitter</div>
<div style="position:absolute;left:502px;top:386px;width:13px;height:13px;box-shadow:inset -1px -1px #fff, inset 1px 1px #808080, inset -2px -2px #d4d0c8, inset 2px 2px #404040;background:#fff"></div>
<svg style="position:absolute;left:502px;top:386px" width="13" height="13" shape-rendering="crispEdges"><path d="M3 5h1v3h-1z M4 6h1v3h-1z M5 7h1v3h-1z M6 6h1v3h-1z M7 5h1v3h-1z M8 4h1v3h-1z M9 3h1v3h-1z" fill="#000"/></svg>
<div class="t" style="left:520px;top:386px;">Show read speed</div>
<div style="position:absolute;left:502px;top:402px;width:13px;height:13px;box-shadow:inset -1px -1px #fff, inset 1px 1px #808080, inset -2px -2px #d4d0c8, inset 2px 2px #404040;background:#d4d0c8"></div>
<svg style="position:absolute;left:502px;top:402px" width="13" height="13" shape-rendering="crispEdges"><path d="M3 5h1v3h-1z M4 6h1v3h-1z M5 7h1v3h-1z M6 6h1v3h-1z M7 5h1v3h-1z M8 4h1v3h-1z M9 3h1v3h-1z" fill="#808080"/></svg>
<div class="t" style="left:521px;top:403px;color:#fff">Show write speed</div>
<div class="t" style="left:520px;top:402px;color:#808080">Show write speed</div>
<div style="position:absolute;left:492px;top:428px;width:139px;height:26px;border:1px solid #fff;box-sizing:border-box"></div>
<div style="position:absolute;left:491px;top:427px;width:139px;height:26px;border:1px solid #808080;box-sizing:border-box"></div>
<div class="t" style="left:502px;top:434px;">Quality score:</div>
<div class="t" style="right:20px;top:434px;color:#000080">0</div>
<div style="position:absolute;left:492px;top:460px;width:139px;height:56px;border:1px solid #fff;box-sizing:border-box"></div>
<div style="position:absolute;left:491px;top:459px;width:139px;height:56px;border:1px solid #808080;box-sizing:border-box"></div>
<svg style="position:absolute;left:575px;top:464px" width="42" height="42" viewBox="0 0 42 42"><defs><radialGradient id="cdg" cx="0.45" cy="0.35" r="0.7"><stop offset="0" stop-color="#f0efec"/><stop offset="0.6" stop-color="#dcdad6"/><stop offset="1" stop-color="#b8b6b2"/></radialGradient></defs><circle cx="20.5" cy="20.5" r="18.5" fill="url(#cdg)" stroke="#bdbbb6" stroke-width="1"/><circle cx="20.5" cy="20.5" r="6" fill="#e4e2de" stroke="#c4c2bd" stroke-width="1.2"/><circle cx="20.5" cy="20.5" r="2.5" fill="#d4d0c8" stroke="#b0aea9" stroke-width="0.8"/></svg>
<div class="t" style="left:502px;top:468px;">Progress:</div>
<div class="t" style="right:20px;top:468px;color:#000080">100 %</div>
<div class="t" style="left:502px;top:484px;">Position:</div>
<div class="t" style="right:20px;top:484px;color:#000080">7999 MB</div>
<div class="t" style="left:502px;top:499px;">Speed:</div>
<div class="t" style="right:20px;top:499px;color:#000080">3.32 X</div>
<div style="position:absolute;left:15px;top:460px;width:146px;height:56px;border:1px solid #fff;box-sizing:border-box"></div>
<div style="position:absolute;left:14px;top:459px;width:146px;height:56px;border:1px solid #808080;box-sizing:border-box"></div>
<div style="position:absolute;left:22px;top:454px;width:56px;height:12px;background:#d4d0c8"></div>
<div style="position:absolute;left:24px;top:456px;width:8px;height:8px;background:#00ffff;border:1px solid #000;box-sizing:border-box"></div>
<div class="t" style="left:35px;top:453px;">PI Errors</div>
<div class="t" style="left:22px;top:470px;">Average:</div>
<div class="t" style="right:490px;top:470px;color:#000080">60.62</div>
<div class="t" style="left:22px;top:485px;">Maximum:</div>
<div class="t" style="right:490px;top:485px;color:#000080">549</div>
<div class="t" style="left:22px;top:500px;">Total:</div>
<div class="t" style="right:490px;top:500px;color:#000080">1708164</div>
<div style="position:absolute;left:173px;top:460px;width:146px;height:56px;border:1px solid #fff;box-sizing:border-box"></div>
<div style="position:absolute;left:172px;top:459px;width:146px;height:56px;border:1px solid #808080;box-sizing:border-box"></div>
<div style="position:absolute;left:180px;top:454px;width:64px;height:12px;background:#d4d0c8"></div>
<div style="position:absolute;left:182px;top:456px;width:8px;height:8px;background:#ffff00;border:1px solid #000;box-sizing:border-box"></div>
<div class="t" style="left:193px;top:453px;">PI Failures</div>
<div class="t" style="left:181px;top:470px;">Average:</div>
<div class="t" style="right:332px;top:470px;color:#000080">2.56</div>
<div class="t" style="left:181px;top:485px;">Maximum:</div>
<div class="t" style="right:332px;top:485px;color:#000080">173</div>
<div class="t" style="left:181px;top:500px;">Total:</div>
<div class="t" style="right:332px;top:500px;color:#000080">63733</div>
<div style="position:absolute;left:332px;top:460px;width:147px;height:42px;border:1px solid #fff;box-sizing:border-box"></div>
<div style="position:absolute;left:331px;top:459px;width:147px;height:42px;border:1px solid #808080;box-sizing:border-box"></div>
<div style="position:absolute;left:339px;top:454px;width:37px;height:12px;background:#d4d0c8"></div>
<div style="position:absolute;left:341px;top:456px;width:8px;height:8px;background:#ff00ff;border:1px solid #000;box-sizing:border-box"></div>
<div class="t" style="left:352px;top:453px;">Jitter</div>
<div class="t" style="left:340px;top:470px;">Average:</div>
<div class="t" style="right:173px;top:470px;color:#000080">11.26 %</div>
<div class="t" style="left:340px;top:485px;">Maximum:</div>
<div class="t" style="right:173px;top:485px;color:#000080">16.5 %</div>
<div class="t" style="left:340px;top:503px;">PO failures:</div>
<div class="t" style="right:173px;top:503px;color:#000080">16032</div>
<svg style="position:absolute;left:556px;top:506px" width="85" height="18"><text x="1" y="16.5" font-family="Liberation Sans" font-weight="bold" font-size="18" fill="#fff" fill-opacity="0.3" textLength="82" lengthAdjust="spacingAndGlyphs">CDRLABS.COM</text></svg>
</body></html>
